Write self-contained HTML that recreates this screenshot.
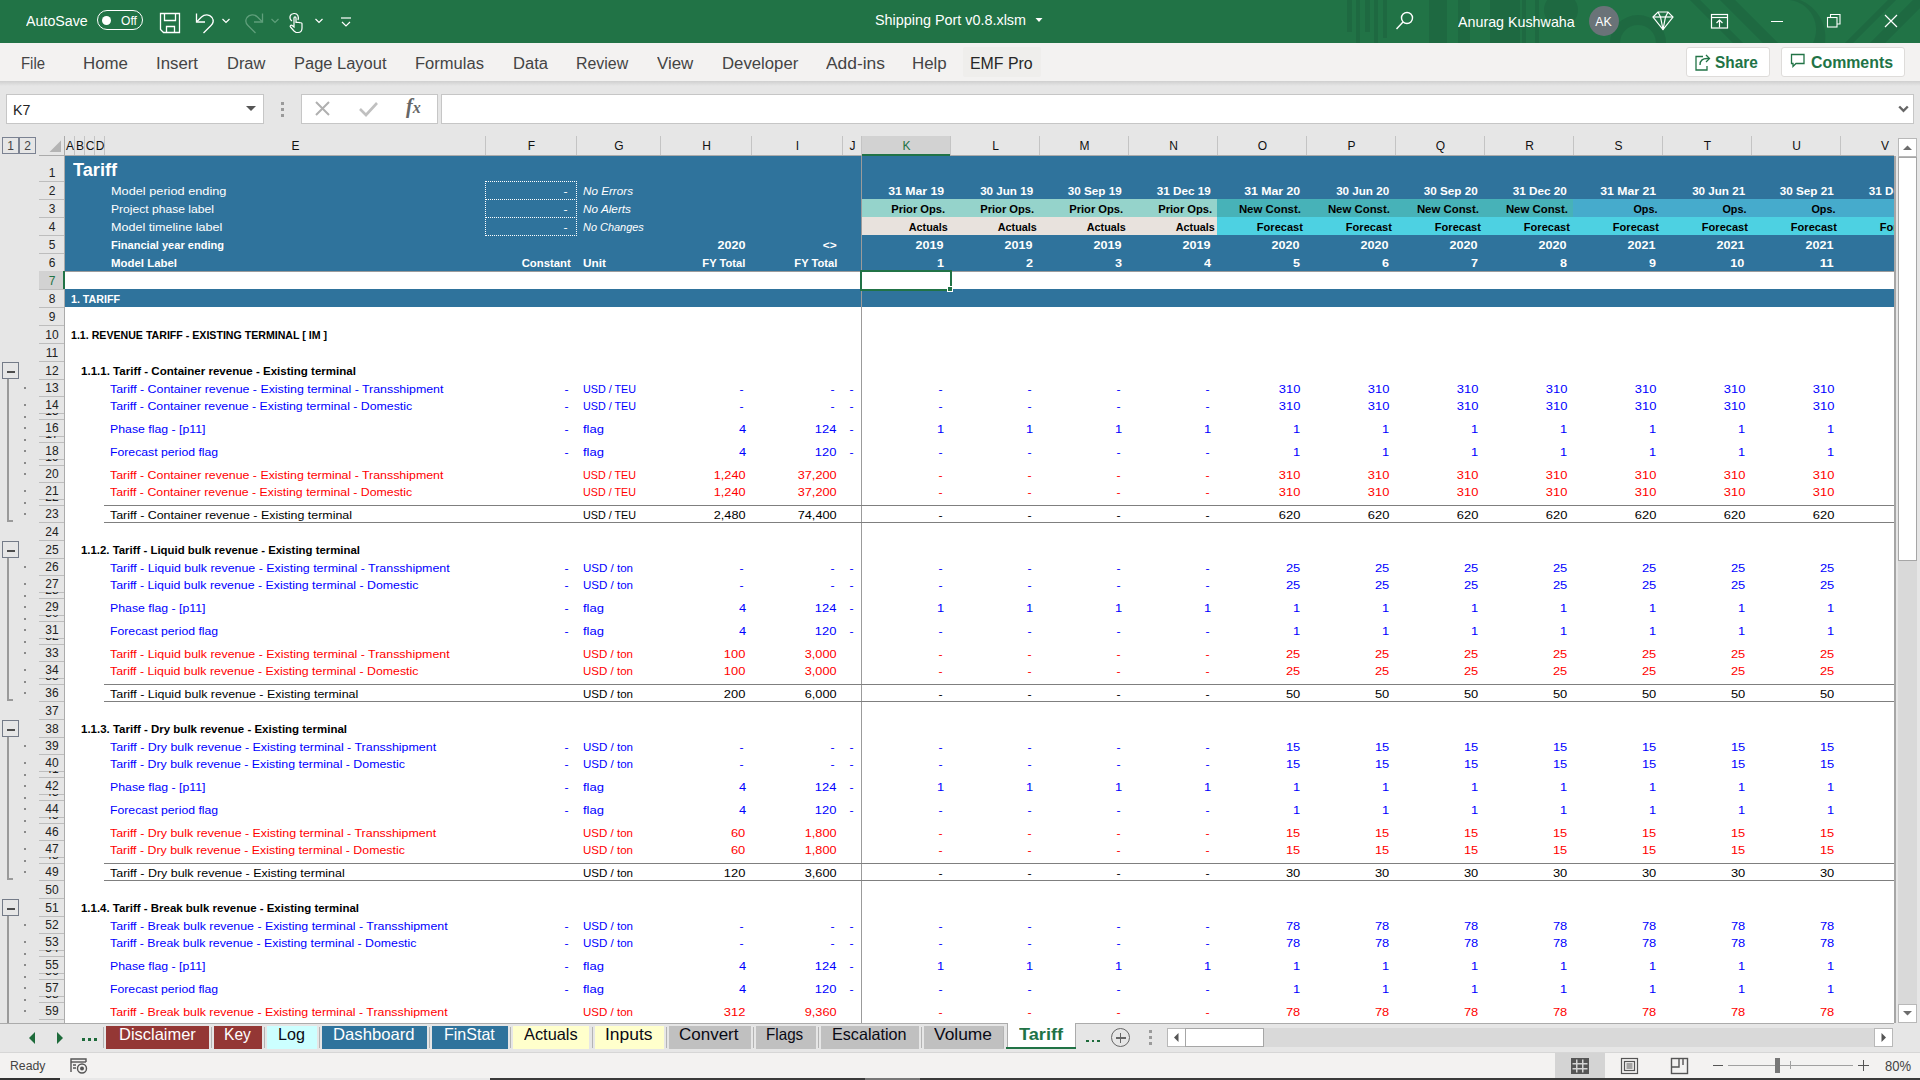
<!DOCTYPE html><html><head><meta charset="utf-8"><style>
html,body{margin:0;padding:0;}
body{width:1920px;height:1080px;overflow:hidden;position:relative;background:#fff;font-family:"Liberation Sans",sans-serif;}
.a{position:absolute;}
.t{position:absolute;white-space:pre;line-height:1;}
</style></head><body>
<div class="a" style="left:0px;top:0px;width:1920px;height:43px;background:#217346;"></div>
<svg class="a" style="left:1330px;top:0px;" width="590" height="43" viewBox="0 0 590 43">
<g fill="#1d6640" opacity="0.75">
<rect x="17" y="0" width="5" height="32"/><rect x="26" y="0" width="4" height="43"/><rect x="35" y="0" width="5" height="32"/>
<rect x="44" y="0" width="4" height="43"/><rect x="53" y="0" width="4" height="38"/>
<rect x="99" y="0" width="18" height="43"/><rect x="128" y="0" width="12" height="43"/>
<rect x="160" y="0" width="30" height="43"/><rect x="192" y="0" width="4" height="43"/>
<rect x="205" y="0" width="4" height="43"/>
<circle cx="231" cy="10" r="17"/>
<path d="M280 43 A 28 28 0 0 1 336 43 L 326 43 A 18 18 0 0 0 290 43 Z"/>
<path d="M390 0 L 405 0 L 448 43 L 433 43 Z"/><path d="M360 0 L 370 0 L 413 43 L 403 43 Z"/>
<path d="M470 0 A 40 40 0 0 1 495 43 L 483 43 A 30 30 0 0 0 460 0 Z"/>
<path d="M540 43 L 583 0 L 590 0 L 590 8 L 555 43 Z"/><path d="M515 43 L 558 0 L 566 0 L 523 43 Z"/>
</g></svg>
<div class="t" style="top:13.85px;font-size:14px;color:#fff;left:26.3px;transform:scaleX(1.0178);transform-origin:0 0;">AutoSave</div>
<div class="a" style="left:97px;top:10px;width:46px;height:20px;border:1px solid #fff;border-radius:10px;box-sizing:border-box;"></div>
<div class="a" style="left:102px;top:15.5px;width:9px;height:9px;border-radius:50%;background:#fff"></div>
<div class="t" style="top:14.30px;font-size:13px;color:#fff;left:120.6px;transform:scaleX(0.9293);transform-origin:0 0;">Off</div>
<svg class="a" style="left:158px;top:11px;" width="24" height="24" viewBox="0 0 24 24"><g fill="none" stroke="#ffffff" stroke-width="1.3"><path d="M2.5 2.5 H21.5 V21.5 H5.5 L2.5 18.5 Z"/><path d="M6.5 2.5 V9.5 H17.5 V2.5"/><path d="M8.5 21.5 V15.5 H16.5 V21.5"/></g></svg>
<svg class="a" style="left:193px;top:11px;" width="24" height="24" viewBox="0 0 24 24"><g fill="none" stroke="#ffffff" stroke-width="1.3"><path d="M3.5 2.5 V11 H12"/><path d="M4 10.5 L8.5 6 C 11.5 3, 16.5 3, 19 6.5 C 21 9.5, 20 12.5, 18 14.5 L 10.5 22"/></g></svg>
<svg class="a" style="left:220px;top:16px;" width="12" height="10" viewBox="0 0 12 10"><path d="M2.5 3 L6 6.5 L9.5 3" fill="none" stroke="#ffffff" stroke-width="1.2"/></svg>
<svg class="a" style="left:242px;top:11px;" width="24" height="24" viewBox="0 0 24 24"><g fill="none" stroke="#5f9f7b" stroke-width="1.3"><path d="M20.5 2.5 V11 H12"/><path d="M20 10.5 L15.5 6 C 12.5 3, 7.5 3, 5 6.5 C 3 9.5, 4 12.5, 6 14.5 L 13.5 22"/></g></svg>
<svg class="a" style="left:269px;top:16px;" width="12" height="10" viewBox="0 0 12 10"><path d="M2.5 3 L6 6.5 L9.5 3" fill="none" stroke="#5f9f7b" stroke-width="1.2"/></svg>
<svg class="a" style="left:286px;top:12px;" width="20" height="22" viewBox="0 0 20 22"><g fill="none" stroke="#ffffff" stroke-width="1.2"><path d="M6 9 C 3 7, 3 2, 8 1.5 C 12 1.2, 13 5, 12 8"/><path d="M8 19 L 4.5 15 C 3.5 13.8, 5 12.5, 6.2 13.5 L 8 15 V 6 C 8 4.5, 10 4.5, 10 6 V 11 C 10 10, 12 10, 12 11 C 12 10.2, 14 10.2, 14 11.2 C 14 10.6, 16 10.6, 16 11.6 V 16 C 16 18.5, 14.5 20.5, 12 20.5 H 10 Z"/></g></svg>
<svg class="a" style="left:313px;top:16px;" width="12" height="10" viewBox="0 0 12 10"><path d="M2.5 3 L6 6.5 L9.5 3" fill="none" stroke="#ffffff" stroke-width="1.2"/></svg>
<svg class="a" style="left:338px;top:15px;" width="16" height="14" viewBox="0 0 16 14"><g fill="none" stroke="#ffffff" stroke-width="1.2"><path d="M3 3 H13"/><path d="M4 7 L8 11 L12 7"/></g></svg>
<div class="t" style="top:12.30px;font-size:15px;color:#fff;left:875.4px;transform:scaleX(0.9582);transform-origin:0 0;">Shipping Port v0.8.xlsm</div>
<svg class="a" style="left:1034px;top:16px;" width="10" height="8" viewBox="0 0 10 8"><path d="M1.5 2 L8.5 2 L5 6 Z" fill="#ffffff"/></svg>
<svg class="a" style="left:1394px;top:10px;" width="22" height="22" viewBox="0 0 22 22"><g fill="none" stroke="#ffffff" stroke-width="1.4"><circle cx="13" cy="8" r="5.5"/><path d="M9 12 L2.5 19"/></g></svg>
<div class="t" style="top:13.80px;font-size:15px;color:#fff;left:1458.3px;transform:scaleX(0.9520);transform-origin:0 0;">Anurag Kushwaha</div>
<div class="a" style="left:1589px;top:6px;width:30px;height:30px;border-radius:50%;background:#6a7378"></div>
<div class="t" style="top:15.00px;font-size:13px;color:#fff;left:1604px;transform:translateX(-50%) scaleX(0.9500);transform-origin:0 0;">AK</div>
<svg class="a" style="left:1651px;top:10px;" width="24" height="22" viewBox="0 0 24 22"><g fill="none" stroke="#ffffff" stroke-width="1.2"><path d="M2 7 L7 2 H17 L22 7 L12 19.5 Z"/><path d="M2 7 H22"/><path d="M7 2 L9.5 7 L12 19.5 L14.5 7 L17 2"/></g></svg>
<svg class="a" style="left:1709px;top:12px;" width="22" height="20" viewBox="0 0 22 20"><g fill="none" stroke="#ffffff" stroke-width="1.2"><rect x="2.5" y="2.5" width="16" height="13.5"/><path d="M2.5 5.5 H18.5"/><path d="M10.5 15.5 V8.5 M7.5 11 L10.5 8 L13.5 11"/></g></svg>
<div class="a" style="left:1771px;top:21px;width:12px;height:1px;background:#ffffff;"></div>
<svg class="a" style="left:1826px;top:13px;" width="16" height="16" viewBox="0 0 16 16"><g fill="none" stroke="#ffffff" stroke-width="1.1"><rect x="1.5" y="4.5" width="9.5" height="9.5"/><path d="M4.5 4.5 V1.5 H14 V11 H11"/></g></svg>
<svg class="a" style="left:1883px;top:13px;" width="16" height="16" viewBox="0 0 16 16"><g fill="none" stroke="#ffffff" stroke-width="1.2"><path d="M2 2 L14 14 M14 2 L2 14"/></g></svg>
<div class="a" style="left:0px;top:43px;width:1920px;height:38px;background:#f3f2f1;"></div>
<div class="t" style="top:55.66px;font-size:16px;color:#444444;left:21px;transform:scaleX(0.9310);transform-origin:0 0;">File</div>
<div class="t" style="top:55.66px;font-size:16px;color:#444444;left:82.5px;transform:scaleX(1.0541);transform-origin:0 0;">Home</div>
<div class="t" style="top:55.66px;font-size:16px;color:#444444;left:156px;transform:scaleX(1.0495);transform-origin:0 0;">Insert</div>
<div class="t" style="top:55.66px;font-size:16px;color:#444444;left:226.6px;transform:scaleX(1.0284);transform-origin:0 0;">Draw</div>
<div class="t" style="top:55.66px;font-size:16px;color:#444444;left:294px;transform:scaleX(1.0294);transform-origin:0 0;">Page Layout</div>
<div class="t" style="top:55.66px;font-size:16px;color:#444444;left:415px;transform:scaleX(1.0346);transform-origin:0 0;">Formulas</div>
<div class="t" style="top:55.66px;font-size:16px;color:#444444;left:512.5px;transform:scaleX(1.0355);transform-origin:0 0;">Data</div>
<div class="t" style="top:55.66px;font-size:16px;color:#444444;left:576px;transform:scaleX(0.9949);transform-origin:0 0;">Review</div>
<div class="t" style="top:55.66px;font-size:16px;color:#444444;left:657px;transform:scaleX(1.0555);transform-origin:0 0;">View</div>
<div class="t" style="top:55.66px;font-size:16px;color:#444444;left:721.5px;transform:scaleX(1.0461);transform-origin:0 0;">Developer</div>
<div class="t" style="top:55.66px;font-size:16px;color:#444444;left:826px;transform:scaleX(1.0876);transform-origin:0 0;">Add-ins</div>
<div class="t" style="top:55.66px;font-size:16px;color:#444444;left:912px;transform:scaleX(1.0544);transform-origin:0 0;">Help</div>
<div class="a" style="left:963px;top:47px;width:78px;height:30px;background:#efeeec;border-radius:2px;"></div>
<div class="t" style="top:55.96px;font-size:16px;color:#262626;left:970px;transform:scaleX(0.9933);transform-origin:0 0;">EMF Pro</div>
<div class="a" style="left:1686px;top:47px;width:84px;height:30px;background:#ffffff;border:1px solid #dedcda;border-radius:3px;box-sizing:border-box;"></div>
<svg class="a" style="left:1693px;top:51px;" width="18" height="22" viewBox="0 0 18 22"><g fill="none" stroke="#217346" stroke-width="1.3"><path d="M10 5.5 H3 V19 H14 V15"/><path d="M7 14 C 7 9, 10 7.5, 14 7.5 H 16"/><path d="M13 4 L16.5 7.5 L13 11"/></g></svg>
<div class="t" style="top:54.96px;font-size:16px;color:#217346;font-weight:700;left:1715px;transform:scaleX(0.9602);transform-origin:0 0;">Share</div>
<div class="a" style="left:1781px;top:47px;width:124px;height:30px;background:#ffffff;border:1px solid #dedcda;border-radius:3px;box-sizing:border-box;"></div>
<svg class="a" style="left:1789px;top:52px;" width="18" height="18" viewBox="0 0 18 18"><g fill="none" stroke="#217346" stroke-width="1.3"><path d="M2.5 2.5 H15 V11.5 H7 L4 14.5 V11.5 H2.5 Z"/></g></svg>
<div class="t" style="top:54.96px;font-size:16px;color:#217346;font-weight:700;left:1810.7px;transform:scaleX(0.9917);transform-origin:0 0;">Comments</div>
<div class="a" style="left:0px;top:81px;width:1920px;height:55px;background:#e6e6e6;"></div>
<div class="a" style="left:0;top:81px;width:1920px;height:5px;background:linear-gradient(#cfcfcf,#e6e6e6)"></div>
<div class="a" style="left:6px;top:94px;width:258px;height:30px;background:#fff;border:1px solid #c6c6c6;box-sizing:border-box;"></div>
<div class="t" style="top:102.30px;font-size:15px;color:#222;left:13px;transform:scaleX(0.9459);transform-origin:0 0;">K7</div>
<svg class="a" style="left:245px;top:104px;" width="12" height="10" viewBox="0 0 12 10"><path d="M1 2 H11 L6 7 Z" fill="#555"/></svg>
<div class="a" style="left:281px;top:102px;width:3px;height:3px;background:#9a9a9a;"></div>
<div class="a" style="left:281px;top:108px;width:3px;height:3px;background:#9a9a9a;"></div>
<div class="a" style="left:281px;top:114px;width:3px;height:3px;background:#9a9a9a;"></div>
<div class="a" style="left:301px;top:94px;width:137px;height:30px;background:#fff;border:1px solid #c6c6c6;box-sizing:border-box;"></div>
<svg class="a" style="left:314px;top:99px;" width="18" height="20" viewBox="0 0 18 20"><path d="M2 3 L15 16 M15 3 L2 16" fill="none" stroke="#b0b0b0" stroke-width="2"/></svg>
<svg class="a" style="left:358px;top:99px;" width="22" height="20" viewBox="0 0 22 20"><path d="M2 10 L8 16 L19 4" fill="none" stroke="#c0c0c0" stroke-width="2.6"/></svg>
<div class="t" style="left:406px;top:96px;font-family:'Liberation Serif',serif;font-style:italic;font-weight:700;font-size:20px;color:#666;line-height:1;">f<span style="font-size:16px">x</span></div>
<div class="a" style="left:441px;top:94px;width:1473px;height:30px;background:#fff;border:1px solid #c6c6c6;box-sizing:border-box;"></div>
<svg class="a" style="left:1898px;top:104px;" width="11" height="9" viewBox="0 0 11 9"><path d="M1.2 2.5 L5.5 6.8 L9.8 2.5" fill="none" stroke="#666" stroke-width="2.4"/></svg>
<div class="a" style="left:0px;top:136px;width:1920px;height:20px;background:#e6e6e6;"></div>
<div class="a" style="left:39px;top:155px;width:1855px;height:1px;background:#ababab;"></div>
<div class="a" style="left:2px;top:137px;width:17px;height:17px;border:1px solid #7b8292;box-sizing:border-box;"></div>
<div class="a" style="left:19px;top:137px;width:17px;height:17px;border:1px solid #7b8292;box-sizing:border-box;"></div>
<div class="t" style="top:140.34px;font-size:12px;color:#444;left:10.5px;transform:translateX(-50%) scaleX(1.0000);transform-origin:0 0;">1</div>
<div class="t" style="top:140.34px;font-size:12px;color:#444;left:27.5px;transform:translateX(-50%) scaleX(1.0000);transform-origin:0 0;">2</div>
<svg class="a" style="left:49px;top:140px;" width="13" height="13" viewBox="0 0 13 13"><path d="M12 0.5 V12 H0.5 Z" fill="#b4b4b4"/></svg>
<div class="a" style="left:64px;top:136px;width:1px;height:20px;background:#ababab;"></div>
<div class="a" style="left:862px;top:136px;width:88px;height:19px;background:#d2d2d2;"></div>
<div class="a" style="left:862px;top:154px;width:88px;height:2px;background:#217346;"></div>
<div class="a" style="left:74px;top:136px;width:1px;height:19px;background:#c4c4c4;"></div>
<div class="t" style="top:140.34px;font-size:12px;color:#111;left:70.0px;transform:translateX(-50%) scaleX(1.0000);transform-origin:0 0;">A</div>
<div class="a" style="left:84px;top:136px;width:1px;height:19px;background:#c4c4c4;"></div>
<div class="t" style="top:140.34px;font-size:12px;color:#111;left:80.0px;transform:translateX(-50%) scaleX(1.0000);transform-origin:0 0;">B</div>
<div class="a" style="left:94px;top:136px;width:1px;height:19px;background:#c4c4c4;"></div>
<div class="t" style="top:140.34px;font-size:12px;color:#111;left:90.0px;transform:translateX(-50%) scaleX(1.0000);transform-origin:0 0;">C</div>
<div class="a" style="left:104px;top:136px;width:1px;height:19px;background:#c4c4c4;"></div>
<div class="t" style="top:140.34px;font-size:12px;color:#111;left:100.0px;transform:translateX(-50%) scaleX(1.0000);transform-origin:0 0;">D</div>
<div class="a" style="left:485px;top:136px;width:1px;height:19px;background:#c4c4c4;"></div>
<div class="t" style="top:140.34px;font-size:12px;color:#111;left:295.5px;transform:translateX(-50%) scaleX(1.0000);transform-origin:0 0;">E</div>
<div class="a" style="left:576px;top:136px;width:1px;height:19px;background:#c4c4c4;"></div>
<div class="t" style="top:140.34px;font-size:12px;color:#111;left:531.5px;transform:translateX(-50%) scaleX(1.0000);transform-origin:0 0;">F</div>
<div class="a" style="left:660px;top:136px;width:1px;height:19px;background:#c4c4c4;"></div>
<div class="t" style="top:140.34px;font-size:12px;color:#111;left:619.0px;transform:translateX(-50%) scaleX(1.0000);transform-origin:0 0;">G</div>
<div class="a" style="left:751px;top:136px;width:1px;height:19px;background:#c4c4c4;"></div>
<div class="t" style="top:140.34px;font-size:12px;color:#111;left:706.5px;transform:translateX(-50%) scaleX(1.0000);transform-origin:0 0;">H</div>
<div class="a" style="left:842px;top:136px;width:1px;height:19px;background:#c4c4c4;"></div>
<div class="t" style="top:140.34px;font-size:12px;color:#111;left:797.5px;transform:translateX(-50%) scaleX(1.0000);transform-origin:0 0;">I</div>
<div class="a" style="left:861px;top:136px;width:1px;height:19px;background:#c4c4c4;"></div>
<div class="t" style="top:140.34px;font-size:12px;color:#111;left:852.5px;transform:translateX(-50%) scaleX(1.0000);transform-origin:0 0;">J</div>
<div class="a" style="left:950px;top:136px;width:1px;height:19px;background:#c4c4c4;"></div>
<div class="t" style="top:140.34px;font-size:12px;color:#217346;left:906.5px;transform:translateX(-50%) scaleX(1.0000);transform-origin:0 0;">K</div>
<div class="a" style="left:1039px;top:136px;width:1px;height:19px;background:#c4c4c4;"></div>
<div class="t" style="top:140.34px;font-size:12px;color:#111;left:995.5px;transform:translateX(-50%) scaleX(1.0000);transform-origin:0 0;">L</div>
<div class="a" style="left:1128px;top:136px;width:1px;height:19px;background:#c4c4c4;"></div>
<div class="t" style="top:140.34px;font-size:12px;color:#111;left:1084.5px;transform:translateX(-50%) scaleX(1.0000);transform-origin:0 0;">M</div>
<div class="a" style="left:1217px;top:136px;width:1px;height:19px;background:#c4c4c4;"></div>
<div class="t" style="top:140.34px;font-size:12px;color:#111;left:1173.5px;transform:translateX(-50%) scaleX(1.0000);transform-origin:0 0;">N</div>
<div class="a" style="left:1306px;top:136px;width:1px;height:19px;background:#c4c4c4;"></div>
<div class="t" style="top:140.34px;font-size:12px;color:#111;left:1262.5px;transform:translateX(-50%) scaleX(1.0000);transform-origin:0 0;">O</div>
<div class="a" style="left:1395px;top:136px;width:1px;height:19px;background:#c4c4c4;"></div>
<div class="t" style="top:140.34px;font-size:12px;color:#111;left:1351.5px;transform:translateX(-50%) scaleX(1.0000);transform-origin:0 0;">P</div>
<div class="a" style="left:1484px;top:136px;width:1px;height:19px;background:#c4c4c4;"></div>
<div class="t" style="top:140.34px;font-size:12px;color:#111;left:1440.5px;transform:translateX(-50%) scaleX(1.0000);transform-origin:0 0;">Q</div>
<div class="a" style="left:1573px;top:136px;width:1px;height:19px;background:#c4c4c4;"></div>
<div class="t" style="top:140.34px;font-size:12px;color:#111;left:1529.5px;transform:translateX(-50%) scaleX(1.0000);transform-origin:0 0;">R</div>
<div class="a" style="left:1662px;top:136px;width:1px;height:19px;background:#c4c4c4;"></div>
<div class="t" style="top:140.34px;font-size:12px;color:#111;left:1618.5px;transform:translateX(-50%) scaleX(1.0000);transform-origin:0 0;">S</div>
<div class="a" style="left:1751px;top:136px;width:1px;height:19px;background:#c4c4c4;"></div>
<div class="t" style="top:140.34px;font-size:12px;color:#111;left:1707.5px;transform:translateX(-50%) scaleX(1.0000);transform-origin:0 0;">T</div>
<div class="a" style="left:1840px;top:136px;width:1px;height:19px;background:#c4c4c4;"></div>
<div class="t" style="top:140.34px;font-size:12px;color:#111;left:1796.5px;transform:translateX(-50%) scaleX(1.0000);transform-origin:0 0;">U</div>
<div class="t" style="top:140.34px;font-size:12px;color:#111;left:1885px;transform:translateX(-50%) scaleX(1.0000);transform-origin:0 0;">V</div>
<div class="a" style="left:0px;top:156px;width:64px;height:867px;background:#e6e6e6;"></div>
<div class="a" style="left:64px;top:156px;width:1px;height:867px;background:#ababab;"></div>
<div class="a" style="left:39px;top:156px;width:25px;height:25px;overflow:hidden">
<div class="t" style="left:0;width:26px;text-align:center;top:10.54px;font-size:12px;color:#222">1</div>
</div>
<div class="a" style="left:39px;top:181px;width:25px;height:1px;background:#bdbdbd;"></div>
<div class="a" style="left:39px;top:181px;width:25px;height:18px;overflow:hidden">
<div class="t" style="left:0;width:26px;text-align:center;top:3.54px;font-size:12px;color:#222">2</div>
</div>
<div class="a" style="left:39px;top:199px;width:25px;height:1px;background:#bdbdbd;"></div>
<div class="a" style="left:39px;top:199px;width:25px;height:18px;overflow:hidden">
<div class="t" style="left:0;width:26px;text-align:center;top:3.54px;font-size:12px;color:#222">3</div>
</div>
<div class="a" style="left:39px;top:217px;width:25px;height:1px;background:#bdbdbd;"></div>
<div class="a" style="left:39px;top:217px;width:25px;height:18px;overflow:hidden">
<div class="t" style="left:0;width:26px;text-align:center;top:3.54px;font-size:12px;color:#222">4</div>
</div>
<div class="a" style="left:39px;top:235px;width:25px;height:1px;background:#bdbdbd;"></div>
<div class="a" style="left:39px;top:235px;width:25px;height:18px;overflow:hidden">
<div class="t" style="left:0;width:26px;text-align:center;top:3.54px;font-size:12px;color:#222">5</div>
</div>
<div class="a" style="left:39px;top:253px;width:25px;height:1px;background:#bdbdbd;"></div>
<div class="a" style="left:39px;top:253px;width:25px;height:18px;overflow:hidden">
<div class="t" style="left:0;width:26px;text-align:center;top:3.54px;font-size:12px;color:#222">6</div>
</div>
<div class="a" style="left:39px;top:271px;width:25px;height:1px;background:#bdbdbd;"></div>
<div class="a" style="left:39px;top:271px;width:24px;height:18px;background:#d2d2d2;"></div>
<div class="a" style="left:63px;top:271px;width:2px;height:18px;background:#217346;"></div>
<div class="a" style="left:39px;top:271px;width:25px;height:18px;overflow:hidden">
<div class="t" style="left:0;width:26px;text-align:center;top:3.54px;font-size:12px;color:#217346">7</div>
</div>
<div class="a" style="left:39px;top:289px;width:25px;height:1px;background:#bdbdbd;"></div>
<div class="a" style="left:39px;top:289px;width:25px;height:18px;overflow:hidden">
<div class="t" style="left:0;width:26px;text-align:center;top:3.54px;font-size:12px;color:#222">8</div>
</div>
<div class="a" style="left:39px;top:307px;width:25px;height:1px;background:#bdbdbd;"></div>
<div class="a" style="left:39px;top:307px;width:25px;height:18px;overflow:hidden">
<div class="t" style="left:0;width:26px;text-align:center;top:3.54px;font-size:12px;color:#222">9</div>
</div>
<div class="a" style="left:39px;top:325px;width:25px;height:1px;background:#bdbdbd;"></div>
<div class="a" style="left:39px;top:325px;width:25px;height:18px;overflow:hidden">
<div class="t" style="left:0;width:26px;text-align:center;top:3.54px;font-size:12px;color:#222">10</div>
</div>
<div class="a" style="left:39px;top:343px;width:25px;height:1px;background:#bdbdbd;"></div>
<div class="a" style="left:39px;top:343px;width:25px;height:18px;overflow:hidden">
<div class="t" style="left:0;width:26px;text-align:center;top:3.54px;font-size:12px;color:#222">11</div>
</div>
<div class="a" style="left:39px;top:361px;width:25px;height:1px;background:#bdbdbd;"></div>
<div class="a" style="left:39px;top:361px;width:25px;height:18px;overflow:hidden">
<div class="t" style="left:0;width:26px;text-align:center;top:3.54px;font-size:12px;color:#222">12</div>
</div>
<div class="a" style="left:39px;top:379px;width:25px;height:1px;background:#bdbdbd;"></div>
<div class="a" style="left:39px;top:379px;width:25px;height:17px;overflow:hidden">
<div class="t" style="left:0;width:26px;text-align:center;top:2.54px;font-size:12px;color:#222">13</div>
</div>
<div class="a" style="left:39px;top:396px;width:25px;height:1px;background:#bdbdbd;"></div>
<div class="a" style="left:39px;top:396px;width:25px;height:17px;overflow:hidden">
<div class="t" style="left:0;width:26px;text-align:center;top:2.54px;font-size:12px;color:#222">14</div>
</div>
<div class="a" style="left:39px;top:413px;width:25px;height:1px;background:#bdbdbd;"></div>
<div class="a" style="left:39px;top:413px;width:25px;height:6px;overflow:hidden">
<div class="t" style="left:0;width:26px;text-align:center;top:-8.46px;font-size:12px;color:#222">15</div>
</div>
<div class="a" style="left:39px;top:419px;width:25px;height:1px;background:#bdbdbd;"></div>
<div class="a" style="left:39px;top:419px;width:25px;height:17px;overflow:hidden">
<div class="t" style="left:0;width:26px;text-align:center;top:2.54px;font-size:12px;color:#222">16</div>
</div>
<div class="a" style="left:39px;top:436px;width:25px;height:1px;background:#bdbdbd;"></div>
<div class="a" style="left:39px;top:436px;width:25px;height:6px;overflow:hidden">
<div class="t" style="left:0;width:26px;text-align:center;top:-8.46px;font-size:12px;color:#222">17</div>
</div>
<div class="a" style="left:39px;top:442px;width:25px;height:1px;background:#bdbdbd;"></div>
<div class="a" style="left:39px;top:442px;width:25px;height:17px;overflow:hidden">
<div class="t" style="left:0;width:26px;text-align:center;top:2.54px;font-size:12px;color:#222">18</div>
</div>
<div class="a" style="left:39px;top:459px;width:25px;height:1px;background:#bdbdbd;"></div>
<div class="a" style="left:39px;top:459px;width:25px;height:6px;overflow:hidden">
<div class="t" style="left:0;width:26px;text-align:center;top:-8.46px;font-size:12px;color:#222">19</div>
</div>
<div class="a" style="left:39px;top:465px;width:25px;height:1px;background:#bdbdbd;"></div>
<div class="a" style="left:39px;top:465px;width:25px;height:17px;overflow:hidden">
<div class="t" style="left:0;width:26px;text-align:center;top:2.54px;font-size:12px;color:#222">20</div>
</div>
<div class="a" style="left:39px;top:482px;width:25px;height:1px;background:#bdbdbd;"></div>
<div class="a" style="left:39px;top:482px;width:25px;height:17px;overflow:hidden">
<div class="t" style="left:0;width:26px;text-align:center;top:2.54px;font-size:12px;color:#222">21</div>
</div>
<div class="a" style="left:39px;top:499px;width:25px;height:1px;background:#bdbdbd;"></div>
<div class="a" style="left:39px;top:499px;width:25px;height:6px;overflow:hidden">
<div class="t" style="left:0;width:26px;text-align:center;top:-8.46px;font-size:12px;color:#222">22</div>
</div>
<div class="a" style="left:39px;top:505px;width:25px;height:1px;background:#bdbdbd;"></div>
<div class="a" style="left:39px;top:505px;width:25px;height:17px;overflow:hidden">
<div class="t" style="left:0;width:26px;text-align:center;top:2.54px;font-size:12px;color:#222">23</div>
</div>
<div class="a" style="left:39px;top:522px;width:25px;height:1px;background:#bdbdbd;"></div>
<div class="a" style="left:39px;top:522px;width:25px;height:18px;overflow:hidden">
<div class="t" style="left:0;width:26px;text-align:center;top:3.54px;font-size:12px;color:#222">24</div>
</div>
<div class="a" style="left:39px;top:540px;width:25px;height:1px;background:#bdbdbd;"></div>
<div class="a" style="left:39px;top:540px;width:25px;height:18px;overflow:hidden">
<div class="t" style="left:0;width:26px;text-align:center;top:3.54px;font-size:12px;color:#222">25</div>
</div>
<div class="a" style="left:39px;top:558px;width:25px;height:1px;background:#bdbdbd;"></div>
<div class="a" style="left:39px;top:558px;width:25px;height:17px;overflow:hidden">
<div class="t" style="left:0;width:26px;text-align:center;top:2.54px;font-size:12px;color:#222">26</div>
</div>
<div class="a" style="left:39px;top:575px;width:25px;height:1px;background:#bdbdbd;"></div>
<div class="a" style="left:39px;top:575px;width:25px;height:17px;overflow:hidden">
<div class="t" style="left:0;width:26px;text-align:center;top:2.54px;font-size:12px;color:#222">27</div>
</div>
<div class="a" style="left:39px;top:592px;width:25px;height:1px;background:#bdbdbd;"></div>
<div class="a" style="left:39px;top:592px;width:25px;height:6px;overflow:hidden">
<div class="t" style="left:0;width:26px;text-align:center;top:-8.46px;font-size:12px;color:#222">28</div>
</div>
<div class="a" style="left:39px;top:598px;width:25px;height:1px;background:#bdbdbd;"></div>
<div class="a" style="left:39px;top:598px;width:25px;height:17px;overflow:hidden">
<div class="t" style="left:0;width:26px;text-align:center;top:2.54px;font-size:12px;color:#222">29</div>
</div>
<div class="a" style="left:39px;top:615px;width:25px;height:1px;background:#bdbdbd;"></div>
<div class="a" style="left:39px;top:615px;width:25px;height:6px;overflow:hidden">
<div class="t" style="left:0;width:26px;text-align:center;top:-8.46px;font-size:12px;color:#222">30</div>
</div>
<div class="a" style="left:39px;top:621px;width:25px;height:1px;background:#bdbdbd;"></div>
<div class="a" style="left:39px;top:621px;width:25px;height:17px;overflow:hidden">
<div class="t" style="left:0;width:26px;text-align:center;top:2.54px;font-size:12px;color:#222">31</div>
</div>
<div class="a" style="left:39px;top:638px;width:25px;height:1px;background:#bdbdbd;"></div>
<div class="a" style="left:39px;top:638px;width:25px;height:6px;overflow:hidden">
<div class="t" style="left:0;width:26px;text-align:center;top:-8.46px;font-size:12px;color:#222">32</div>
</div>
<div class="a" style="left:39px;top:644px;width:25px;height:1px;background:#bdbdbd;"></div>
<div class="a" style="left:39px;top:644px;width:25px;height:17px;overflow:hidden">
<div class="t" style="left:0;width:26px;text-align:center;top:2.54px;font-size:12px;color:#222">33</div>
</div>
<div class="a" style="left:39px;top:661px;width:25px;height:1px;background:#bdbdbd;"></div>
<div class="a" style="left:39px;top:661px;width:25px;height:17px;overflow:hidden">
<div class="t" style="left:0;width:26px;text-align:center;top:2.54px;font-size:12px;color:#222">34</div>
</div>
<div class="a" style="left:39px;top:678px;width:25px;height:1px;background:#bdbdbd;"></div>
<div class="a" style="left:39px;top:678px;width:25px;height:6px;overflow:hidden">
<div class="t" style="left:0;width:26px;text-align:center;top:-8.46px;font-size:12px;color:#222">35</div>
</div>
<div class="a" style="left:39px;top:684px;width:25px;height:1px;background:#bdbdbd;"></div>
<div class="a" style="left:39px;top:684px;width:25px;height:17px;overflow:hidden">
<div class="t" style="left:0;width:26px;text-align:center;top:2.54px;font-size:12px;color:#222">36</div>
</div>
<div class="a" style="left:39px;top:701px;width:25px;height:1px;background:#bdbdbd;"></div>
<div class="a" style="left:39px;top:701px;width:25px;height:18px;overflow:hidden">
<div class="t" style="left:0;width:26px;text-align:center;top:3.54px;font-size:12px;color:#222">37</div>
</div>
<div class="a" style="left:39px;top:719px;width:25px;height:1px;background:#bdbdbd;"></div>
<div class="a" style="left:39px;top:719px;width:25px;height:18px;overflow:hidden">
<div class="t" style="left:0;width:26px;text-align:center;top:3.54px;font-size:12px;color:#222">38</div>
</div>
<div class="a" style="left:39px;top:737px;width:25px;height:1px;background:#bdbdbd;"></div>
<div class="a" style="left:39px;top:737px;width:25px;height:17px;overflow:hidden">
<div class="t" style="left:0;width:26px;text-align:center;top:2.54px;font-size:12px;color:#222">39</div>
</div>
<div class="a" style="left:39px;top:754px;width:25px;height:1px;background:#bdbdbd;"></div>
<div class="a" style="left:39px;top:754px;width:25px;height:17px;overflow:hidden">
<div class="t" style="left:0;width:26px;text-align:center;top:2.54px;font-size:12px;color:#222">40</div>
</div>
<div class="a" style="left:39px;top:771px;width:25px;height:1px;background:#bdbdbd;"></div>
<div class="a" style="left:39px;top:771px;width:25px;height:6px;overflow:hidden">
<div class="t" style="left:0;width:26px;text-align:center;top:-8.46px;font-size:12px;color:#222">41</div>
</div>
<div class="a" style="left:39px;top:777px;width:25px;height:1px;background:#bdbdbd;"></div>
<div class="a" style="left:39px;top:777px;width:25px;height:17px;overflow:hidden">
<div class="t" style="left:0;width:26px;text-align:center;top:2.54px;font-size:12px;color:#222">42</div>
</div>
<div class="a" style="left:39px;top:794px;width:25px;height:1px;background:#bdbdbd;"></div>
<div class="a" style="left:39px;top:794px;width:25px;height:6px;overflow:hidden">
<div class="t" style="left:0;width:26px;text-align:center;top:-8.46px;font-size:12px;color:#222">43</div>
</div>
<div class="a" style="left:39px;top:800px;width:25px;height:1px;background:#bdbdbd;"></div>
<div class="a" style="left:39px;top:800px;width:25px;height:17px;overflow:hidden">
<div class="t" style="left:0;width:26px;text-align:center;top:2.54px;font-size:12px;color:#222">44</div>
</div>
<div class="a" style="left:39px;top:817px;width:25px;height:1px;background:#bdbdbd;"></div>
<div class="a" style="left:39px;top:817px;width:25px;height:6px;overflow:hidden">
<div class="t" style="left:0;width:26px;text-align:center;top:-8.46px;font-size:12px;color:#222">45</div>
</div>
<div class="a" style="left:39px;top:823px;width:25px;height:1px;background:#bdbdbd;"></div>
<div class="a" style="left:39px;top:823px;width:25px;height:17px;overflow:hidden">
<div class="t" style="left:0;width:26px;text-align:center;top:2.54px;font-size:12px;color:#222">46</div>
</div>
<div class="a" style="left:39px;top:840px;width:25px;height:1px;background:#bdbdbd;"></div>
<div class="a" style="left:39px;top:840px;width:25px;height:17px;overflow:hidden">
<div class="t" style="left:0;width:26px;text-align:center;top:2.54px;font-size:12px;color:#222">47</div>
</div>
<div class="a" style="left:39px;top:857px;width:25px;height:1px;background:#bdbdbd;"></div>
<div class="a" style="left:39px;top:857px;width:25px;height:6px;overflow:hidden">
<div class="t" style="left:0;width:26px;text-align:center;top:-8.46px;font-size:12px;color:#222">48</div>
</div>
<div class="a" style="left:39px;top:863px;width:25px;height:1px;background:#bdbdbd;"></div>
<div class="a" style="left:39px;top:863px;width:25px;height:17px;overflow:hidden">
<div class="t" style="left:0;width:26px;text-align:center;top:2.54px;font-size:12px;color:#222">49</div>
</div>
<div class="a" style="left:39px;top:880px;width:25px;height:1px;background:#bdbdbd;"></div>
<div class="a" style="left:39px;top:880px;width:25px;height:18px;overflow:hidden">
<div class="t" style="left:0;width:26px;text-align:center;top:3.54px;font-size:12px;color:#222">50</div>
</div>
<div class="a" style="left:39px;top:898px;width:25px;height:1px;background:#bdbdbd;"></div>
<div class="a" style="left:39px;top:898px;width:25px;height:18px;overflow:hidden">
<div class="t" style="left:0;width:26px;text-align:center;top:3.54px;font-size:12px;color:#222">51</div>
</div>
<div class="a" style="left:39px;top:916px;width:25px;height:1px;background:#bdbdbd;"></div>
<div class="a" style="left:39px;top:916px;width:25px;height:17px;overflow:hidden">
<div class="t" style="left:0;width:26px;text-align:center;top:2.54px;font-size:12px;color:#222">52</div>
</div>
<div class="a" style="left:39px;top:933px;width:25px;height:1px;background:#bdbdbd;"></div>
<div class="a" style="left:39px;top:933px;width:25px;height:17px;overflow:hidden">
<div class="t" style="left:0;width:26px;text-align:center;top:2.54px;font-size:12px;color:#222">53</div>
</div>
<div class="a" style="left:39px;top:950px;width:25px;height:1px;background:#bdbdbd;"></div>
<div class="a" style="left:39px;top:950px;width:25px;height:6px;overflow:hidden">
<div class="t" style="left:0;width:26px;text-align:center;top:-8.46px;font-size:12px;color:#222">54</div>
</div>
<div class="a" style="left:39px;top:956px;width:25px;height:1px;background:#bdbdbd;"></div>
<div class="a" style="left:39px;top:956px;width:25px;height:17px;overflow:hidden">
<div class="t" style="left:0;width:26px;text-align:center;top:2.54px;font-size:12px;color:#222">55</div>
</div>
<div class="a" style="left:39px;top:973px;width:25px;height:1px;background:#bdbdbd;"></div>
<div class="a" style="left:39px;top:973px;width:25px;height:6px;overflow:hidden">
<div class="t" style="left:0;width:26px;text-align:center;top:-8.46px;font-size:12px;color:#222">56</div>
</div>
<div class="a" style="left:39px;top:979px;width:25px;height:1px;background:#bdbdbd;"></div>
<div class="a" style="left:39px;top:979px;width:25px;height:17px;overflow:hidden">
<div class="t" style="left:0;width:26px;text-align:center;top:2.54px;font-size:12px;color:#222">57</div>
</div>
<div class="a" style="left:39px;top:996px;width:25px;height:1px;background:#bdbdbd;"></div>
<div class="a" style="left:39px;top:996px;width:25px;height:6px;overflow:hidden">
<div class="t" style="left:0;width:26px;text-align:center;top:-8.46px;font-size:12px;color:#222">58</div>
</div>
<div class="a" style="left:39px;top:1002px;width:25px;height:1px;background:#bdbdbd;"></div>
<div class="a" style="left:39px;top:1002px;width:25px;height:17px;overflow:hidden">
<div class="t" style="left:0;width:26px;text-align:center;top:2.54px;font-size:12px;color:#222">59</div>
</div>
<div class="a" style="left:39px;top:1019px;width:25px;height:1px;background:#bdbdbd;"></div>
<div class="a" style="left:39px;top:1019px;width:25px;height:4px;overflow:hidden">
<div class="t" style="left:0;width:26px;text-align:center;top:2.54px;font-size:12px;color:#222">60</div>
</div>
<div class="a" style="left:2px;top:362px;width:17px;height:17px;border:1px solid #747b88;box-sizing:border-box"></div>
<div class="a" style="left:7px;top:371px;width:8px;height:2px;background:#4d4d4d;"></div>
<div class="a" style="left:7px;top:379px;width:2px;height:143px;background:#9a9a9a;"></div>
<div class="a" style="left:7px;top:520px;width:6px;height:2px;background:#9a9a9a;"></div>
<div class="a" style="left:24px;top:387px;width:2px;height:2px;background:#8a8a8a;"></div>
<div class="a" style="left:24px;top:404px;width:2px;height:2px;background:#8a8a8a;"></div>
<div class="a" style="left:24px;top:416px;width:2px;height:2px;background:#8a8a8a;"></div>
<div class="a" style="left:24px;top:427px;width:2px;height:2px;background:#8a8a8a;"></div>
<div class="a" style="left:24px;top:439px;width:2px;height:2px;background:#8a8a8a;"></div>
<div class="a" style="left:24px;top:450px;width:2px;height:2px;background:#8a8a8a;"></div>
<div class="a" style="left:24px;top:462px;width:2px;height:2px;background:#8a8a8a;"></div>
<div class="a" style="left:24px;top:473px;width:2px;height:2px;background:#8a8a8a;"></div>
<div class="a" style="left:24px;top:490px;width:2px;height:2px;background:#8a8a8a;"></div>
<div class="a" style="left:24px;top:502px;width:2px;height:2px;background:#8a8a8a;"></div>
<div class="a" style="left:24px;top:513px;width:2px;height:2px;background:#8a8a8a;"></div>
<div class="a" style="left:2px;top:541px;width:17px;height:17px;border:1px solid #747b88;box-sizing:border-box"></div>
<div class="a" style="left:7px;top:550px;width:8px;height:2px;background:#4d4d4d;"></div>
<div class="a" style="left:7px;top:558px;width:2px;height:143px;background:#9a9a9a;"></div>
<div class="a" style="left:7px;top:699px;width:6px;height:2px;background:#9a9a9a;"></div>
<div class="a" style="left:24px;top:566px;width:2px;height:2px;background:#8a8a8a;"></div>
<div class="a" style="left:24px;top:583px;width:2px;height:2px;background:#8a8a8a;"></div>
<div class="a" style="left:24px;top:595px;width:2px;height:2px;background:#8a8a8a;"></div>
<div class="a" style="left:24px;top:606px;width:2px;height:2px;background:#8a8a8a;"></div>
<div class="a" style="left:24px;top:618px;width:2px;height:2px;background:#8a8a8a;"></div>
<div class="a" style="left:24px;top:629px;width:2px;height:2px;background:#8a8a8a;"></div>
<div class="a" style="left:24px;top:641px;width:2px;height:2px;background:#8a8a8a;"></div>
<div class="a" style="left:24px;top:652px;width:2px;height:2px;background:#8a8a8a;"></div>
<div class="a" style="left:24px;top:669px;width:2px;height:2px;background:#8a8a8a;"></div>
<div class="a" style="left:24px;top:681px;width:2px;height:2px;background:#8a8a8a;"></div>
<div class="a" style="left:24px;top:692px;width:2px;height:2px;background:#8a8a8a;"></div>
<div class="a" style="left:2px;top:720px;width:17px;height:17px;border:1px solid #747b88;box-sizing:border-box"></div>
<div class="a" style="left:7px;top:729px;width:8px;height:2px;background:#4d4d4d;"></div>
<div class="a" style="left:7px;top:737px;width:2px;height:143px;background:#9a9a9a;"></div>
<div class="a" style="left:7px;top:878px;width:6px;height:2px;background:#9a9a9a;"></div>
<div class="a" style="left:24px;top:745px;width:2px;height:2px;background:#8a8a8a;"></div>
<div class="a" style="left:24px;top:762px;width:2px;height:2px;background:#8a8a8a;"></div>
<div class="a" style="left:24px;top:774px;width:2px;height:2px;background:#8a8a8a;"></div>
<div class="a" style="left:24px;top:785px;width:2px;height:2px;background:#8a8a8a;"></div>
<div class="a" style="left:24px;top:797px;width:2px;height:2px;background:#8a8a8a;"></div>
<div class="a" style="left:24px;top:808px;width:2px;height:2px;background:#8a8a8a;"></div>
<div class="a" style="left:24px;top:820px;width:2px;height:2px;background:#8a8a8a;"></div>
<div class="a" style="left:24px;top:831px;width:2px;height:2px;background:#8a8a8a;"></div>
<div class="a" style="left:24px;top:848px;width:2px;height:2px;background:#8a8a8a;"></div>
<div class="a" style="left:24px;top:860px;width:2px;height:2px;background:#8a8a8a;"></div>
<div class="a" style="left:24px;top:871px;width:2px;height:2px;background:#8a8a8a;"></div>
<div class="a" style="left:2px;top:899px;width:17px;height:17px;border:1px solid #747b88;box-sizing:border-box"></div>
<div class="a" style="left:7px;top:908px;width:8px;height:2px;background:#4d4d4d;"></div>
<div class="a" style="left:7px;top:916px;width:2px;height:107px;background:#9a9a9a;"></div>
<div class="a" style="left:24px;top:924px;width:2px;height:2px;background:#8a8a8a;"></div>
<div class="a" style="left:24px;top:941px;width:2px;height:2px;background:#8a8a8a;"></div>
<div class="a" style="left:24px;top:953px;width:2px;height:2px;background:#8a8a8a;"></div>
<div class="a" style="left:24px;top:964px;width:2px;height:2px;background:#8a8a8a;"></div>
<div class="a" style="left:24px;top:976px;width:2px;height:2px;background:#8a8a8a;"></div>
<div class="a" style="left:24px;top:987px;width:2px;height:2px;background:#8a8a8a;"></div>
<div class="a" style="left:24px;top:999px;width:2px;height:2px;background:#8a8a8a;"></div>
<div class="a" style="left:24px;top:1010px;width:2px;height:2px;background:#8a8a8a;"></div>
<div class="a" style="left:24px;top:1027px;width:2px;height:2px;background:#8a8a8a;"></div>
<div class="a" style="left:0;top:0;width:1920px;height:1080px;clip-path:inset(156px 26px 57px 65px)">
<div class="a" style="left:65px;top:156px;width:1829px;height:115px;background:#2f739c;"></div>
<div class="a" style="left:65px;top:289px;width:1829px;height:18px;background:#2f739c;"></div>
<div class="t" style="top:161.69px;font-size:17.5px;color:#ffffff;font-weight:700;left:73.3px;transform:scaleX(1.0365);transform-origin:0 0;">Tariff</div>
<div class="t" style="top:186.39px;font-size:11px;color:#ffffff;left:110.6px;transform:scaleX(1.1575);transform-origin:0 0;">Model period ending</div>
<div class="t" style="top:204.39px;font-size:11px;color:#ffffff;left:110.6px;transform:scaleX(1.1000);transform-origin:0 0;">Project phase label</div>
<div class="t" style="top:222.39px;font-size:11px;color:#ffffff;left:110.6px;transform:scaleX(1.1443);transform-origin:0 0;">Model timeline label</div>
<div class="t" style="top:240.39px;font-size:11px;color:#ffffff;font-weight:700;left:110.6px;transform:scaleX(1.0046);transform-origin:0 0;">Financial year ending</div>
<div class="t" style="top:258.39px;font-size:11px;color:#ffffff;font-weight:700;left:110.6px;transform:scaleX(1.0383);transform-origin:0 0;">Model Label</div>
<div class="a" style="left:485px;top:181px;width:92px;height:55px;border:1px dotted #fff;box-sizing:border-box"></div>
<div class="a" style="left:485px;top:199px;width:92px;height:1px;border-top:1px dotted #fff;box-sizing:border-box"></div>
<div class="a" style="left:485px;top:217px;width:92px;height:1px;border-top:1px dotted #fff;box-sizing:border-box"></div>
<div class="t" style="top:186.39px;font-size:11px;color:#ffffff;right:1352px;transform:scaleX(1.1194);transform-origin:100% 0;">-</div>
<div class="t" style="top:186.39px;font-size:11px;color:#ffffff;font-style:italic;left:582.5px;transform:scaleX(1.0619);transform-origin:0 0;">No Errors</div>
<div class="t" style="top:204.39px;font-size:11px;color:#ffffff;right:1352px;transform:scaleX(1.1194);transform-origin:100% 0;">-</div>
<div class="t" style="top:204.39px;font-size:11px;color:#ffffff;font-style:italic;left:582.5px;transform:scaleX(1.0711);transform-origin:0 0;">No Alerts</div>
<div class="t" style="top:222.39px;font-size:11px;color:#ffffff;right:1352px;transform:scaleX(1.1194);transform-origin:100% 0;">-</div>
<div class="t" style="top:222.39px;font-size:11px;color:#ffffff;font-style:italic;left:582.5px;transform:scaleX(0.9946);transform-origin:0 0;">No Changes</div>
<div class="t" style="top:240.39px;font-size:11px;color:#ffffff;font-weight:700;right:1175px;transform:scaleX(1.1442);transform-origin:100% 0;">2020</div>
<div class="t" style="top:240.39px;font-size:11px;color:#ffffff;font-weight:700;right:1083px;transform:scaleX(1.0897);transform-origin:100% 0;">&lt;&gt;</div>
<div class="t" style="top:258.39px;font-size:11px;color:#ffffff;font-weight:700;right:1349.5px;transform:scaleX(1.0280);transform-origin:100% 0;">Constant</div>
<div class="t" style="top:258.39px;font-size:11px;color:#ffffff;font-weight:700;left:582.5px;transform:scaleX(1.0756);transform-origin:0 0;">Unit</div>
<div class="t" style="top:258.39px;font-size:11px;color:#ffffff;font-weight:700;right:1174.2px;transform:scaleX(1.0148);transform-origin:100% 0;">FY Total</div>
<div class="t" style="top:258.39px;font-size:11px;color:#ffffff;font-weight:700;right:1083px;transform:scaleX(1.0148);transform-origin:100% 0;">FY Total</div>
<div class="a" style="left:861px;top:199px;width:89px;height:18px;background:#95d3cb;"></div>
<div class="a" style="left:861px;top:217px;width:89px;height:18px;background:#e8e2dd;"></div>
<div class="t" style="top:186.39px;font-size:11px;color:#ffffff;font-weight:700;right:976.3px;transform:scaleX(1.1168);transform-origin:100% 0;">31 Mar 19</div>
<div class="t" style="top:204.39px;font-size:11px;color:#000;font-weight:700;right:975px;transform:scaleX(1.0154);transform-origin:100% 0;">Prior Ops.</div>
<div class="t" style="top:222.39px;font-size:11px;color:#000;font-weight:700;right:972.5px;transform:scaleX(0.9815);transform-origin:100% 0;">Actuals</div>
<div class="t" style="top:240.39px;font-size:11px;color:#ffffff;font-weight:700;right:976.3px;transform:scaleX(1.1442);transform-origin:100% 0;">2019</div>
<div class="t" style="top:258.39px;font-size:11px;color:#ffffff;font-weight:700;right:976.3px;transform:scaleX(1.1442);transform-origin:100% 0;">1</div>
<div class="a" style="left:950px;top:199px;width:89px;height:18px;background:#95d3cb;"></div>
<div class="a" style="left:950px;top:217px;width:89px;height:18px;background:#e8e2dd;"></div>
<div class="t" style="top:186.39px;font-size:11px;color:#ffffff;font-weight:700;right:887.3px;transform:scaleX(1.0570);transform-origin:100% 0;">30 Jun 19</div>
<div class="t" style="top:204.39px;font-size:11px;color:#000;font-weight:700;right:886px;transform:scaleX(1.0154);transform-origin:100% 0;">Prior Ops.</div>
<div class="t" style="top:222.39px;font-size:11px;color:#000;font-weight:700;right:883.5px;transform:scaleX(0.9815);transform-origin:100% 0;">Actuals</div>
<div class="t" style="top:240.39px;font-size:11px;color:#ffffff;font-weight:700;right:887.3px;transform:scaleX(1.1442);transform-origin:100% 0;">2019</div>
<div class="t" style="top:258.39px;font-size:11px;color:#ffffff;font-weight:700;right:887.3px;transform:scaleX(1.1442);transform-origin:100% 0;">2</div>
<div class="a" style="left:1039px;top:199px;width:89px;height:18px;background:#95d3cb;"></div>
<div class="a" style="left:1039px;top:217px;width:89px;height:18px;background:#e8e2dd;"></div>
<div class="t" style="top:186.39px;font-size:11px;color:#ffffff;font-weight:700;right:798.3px;transform:scaleX(1.0639);transform-origin:100% 0;">30 Sep 19</div>
<div class="t" style="top:204.39px;font-size:11px;color:#000;font-weight:700;right:797px;transform:scaleX(1.0154);transform-origin:100% 0;">Prior Ops.</div>
<div class="t" style="top:222.39px;font-size:11px;color:#000;font-weight:700;right:794.5px;transform:scaleX(0.9815);transform-origin:100% 0;">Actuals</div>
<div class="t" style="top:240.39px;font-size:11px;color:#ffffff;font-weight:700;right:798.3px;transform:scaleX(1.1442);transform-origin:100% 0;">2019</div>
<div class="t" style="top:258.39px;font-size:11px;color:#ffffff;font-weight:700;right:798.3px;transform:scaleX(1.1442);transform-origin:100% 0;">3</div>
<div class="a" style="left:1128px;top:199px;width:89px;height:18px;background:#95d3cb;"></div>
<div class="a" style="left:1128px;top:217px;width:89px;height:18px;background:#e8e2dd;"></div>
<div class="t" style="top:186.39px;font-size:11px;color:#ffffff;font-weight:700;right:709.3px;transform:scaleX(1.0638);transform-origin:100% 0;">31 Dec 19</div>
<div class="t" style="top:204.39px;font-size:11px;color:#000;font-weight:700;right:708px;transform:scaleX(1.0154);transform-origin:100% 0;">Prior Ops.</div>
<div class="t" style="top:222.39px;font-size:11px;color:#000;font-weight:700;right:705.5px;transform:scaleX(0.9815);transform-origin:100% 0;">Actuals</div>
<div class="t" style="top:240.39px;font-size:11px;color:#ffffff;font-weight:700;right:709.3px;transform:scaleX(1.1442);transform-origin:100% 0;">2019</div>
<div class="t" style="top:258.39px;font-size:11px;color:#ffffff;font-weight:700;right:709.3px;transform:scaleX(1.1442);transform-origin:100% 0;">4</div>
<div class="a" style="left:1217px;top:199px;width:89px;height:18px;background:#47b2b8;"></div>
<div class="a" style="left:1217px;top:217px;width:89px;height:18px;background:#4dd1e2;"></div>
<div class="t" style="top:186.39px;font-size:11px;color:#ffffff;font-weight:700;right:620.3px;transform:scaleX(1.1168);transform-origin:100% 0;">31 Mar 20</div>
<div class="t" style="top:204.39px;font-size:11px;color:#000;font-weight:700;right:619px;transform:scaleX(1.0352);transform-origin:100% 0;">New Const.</div>
<div class="t" style="top:222.39px;font-size:11px;color:#000;font-weight:700;right:617px;transform:scaleX(1.0032);transform-origin:100% 0;">Forecast</div>
<div class="t" style="top:240.39px;font-size:11px;color:#ffffff;font-weight:700;right:620.3px;transform:scaleX(1.1442);transform-origin:100% 0;">2020</div>
<div class="t" style="top:258.39px;font-size:11px;color:#ffffff;font-weight:700;right:620.3px;transform:scaleX(1.1442);transform-origin:100% 0;">5</div>
<div class="a" style="left:1306px;top:199px;width:89px;height:18px;background:#47b2b8;"></div>
<div class="a" style="left:1306px;top:217px;width:89px;height:18px;background:#4dd1e2;"></div>
<div class="t" style="top:186.39px;font-size:11px;color:#ffffff;font-weight:700;right:531.3px;transform:scaleX(1.0570);transform-origin:100% 0;">30 Jun 20</div>
<div class="t" style="top:204.39px;font-size:11px;color:#000;font-weight:700;right:530px;transform:scaleX(1.0352);transform-origin:100% 0;">New Const.</div>
<div class="t" style="top:222.39px;font-size:11px;color:#000;font-weight:700;right:528px;transform:scaleX(1.0032);transform-origin:100% 0;">Forecast</div>
<div class="t" style="top:240.39px;font-size:11px;color:#ffffff;font-weight:700;right:531.3px;transform:scaleX(1.1442);transform-origin:100% 0;">2020</div>
<div class="t" style="top:258.39px;font-size:11px;color:#ffffff;font-weight:700;right:531.3px;transform:scaleX(1.1442);transform-origin:100% 0;">6</div>
<div class="a" style="left:1395px;top:199px;width:89px;height:18px;background:#47b2b8;"></div>
<div class="a" style="left:1395px;top:217px;width:89px;height:18px;background:#4dd1e2;"></div>
<div class="t" style="top:186.39px;font-size:11px;color:#ffffff;font-weight:700;right:442.29999999999995px;transform:scaleX(1.0639);transform-origin:100% 0;">30 Sep 20</div>
<div class="t" style="top:204.39px;font-size:11px;color:#000;font-weight:700;right:441px;transform:scaleX(1.0352);transform-origin:100% 0;">New Const.</div>
<div class="t" style="top:222.39px;font-size:11px;color:#000;font-weight:700;right:439px;transform:scaleX(1.0032);transform-origin:100% 0;">Forecast</div>
<div class="t" style="top:240.39px;font-size:11px;color:#ffffff;font-weight:700;right:442.29999999999995px;transform:scaleX(1.1442);transform-origin:100% 0;">2020</div>
<div class="t" style="top:258.39px;font-size:11px;color:#ffffff;font-weight:700;right:442.29999999999995px;transform:scaleX(1.1442);transform-origin:100% 0;">7</div>
<div class="a" style="left:1484px;top:199px;width:89px;height:18px;background:#47b2b8;"></div>
<div class="a" style="left:1484px;top:217px;width:89px;height:18px;background:#4dd1e2;"></div>
<div class="t" style="top:186.39px;font-size:11px;color:#ffffff;font-weight:700;right:353.29999999999995px;transform:scaleX(1.0638);transform-origin:100% 0;">31 Dec 20</div>
<div class="t" style="top:204.39px;font-size:11px;color:#000;font-weight:700;right:352px;transform:scaleX(1.0352);transform-origin:100% 0;">New Const.</div>
<div class="t" style="top:222.39px;font-size:11px;color:#000;font-weight:700;right:350px;transform:scaleX(1.0032);transform-origin:100% 0;">Forecast</div>
<div class="t" style="top:240.39px;font-size:11px;color:#ffffff;font-weight:700;right:353.29999999999995px;transform:scaleX(1.1442);transform-origin:100% 0;">2020</div>
<div class="t" style="top:258.39px;font-size:11px;color:#ffffff;font-weight:700;right:353.29999999999995px;transform:scaleX(1.1442);transform-origin:100% 0;">8</div>
<div class="a" style="left:1573px;top:199px;width:89px;height:18px;background:#46abcc;"></div>
<div class="a" style="left:1573px;top:217px;width:89px;height:18px;background:#4dd1e2;"></div>
<div class="t" style="top:186.39px;font-size:11px;color:#ffffff;font-weight:700;right:264.29999999999995px;transform:scaleX(1.1168);transform-origin:100% 0;">31 Mar 21</div>
<div class="t" style="top:204.39px;font-size:11px;color:#000;font-weight:700;right:263px;transform:scaleX(0.9816);transform-origin:100% 0;">Ops.</div>
<div class="t" style="top:222.39px;font-size:11px;color:#000;font-weight:700;right:261px;transform:scaleX(1.0032);transform-origin:100% 0;">Forecast</div>
<div class="t" style="top:240.39px;font-size:11px;color:#ffffff;font-weight:700;right:264.29999999999995px;transform:scaleX(1.1442);transform-origin:100% 0;">2021</div>
<div class="t" style="top:258.39px;font-size:11px;color:#ffffff;font-weight:700;right:264.29999999999995px;transform:scaleX(1.1442);transform-origin:100% 0;">9</div>
<div class="a" style="left:1662px;top:199px;width:89px;height:18px;background:#46abcc;"></div>
<div class="a" style="left:1662px;top:217px;width:89px;height:18px;background:#4dd1e2;"></div>
<div class="t" style="top:186.39px;font-size:11px;color:#ffffff;font-weight:700;right:175.29999999999995px;transform:scaleX(1.0570);transform-origin:100% 0;">30 Jun 21</div>
<div class="t" style="top:204.39px;font-size:11px;color:#000;font-weight:700;right:174px;transform:scaleX(0.9816);transform-origin:100% 0;">Ops.</div>
<div class="t" style="top:222.39px;font-size:11px;color:#000;font-weight:700;right:172px;transform:scaleX(1.0032);transform-origin:100% 0;">Forecast</div>
<div class="t" style="top:240.39px;font-size:11px;color:#ffffff;font-weight:700;right:175.29999999999995px;transform:scaleX(1.1442);transform-origin:100% 0;">2021</div>
<div class="t" style="top:258.39px;font-size:11px;color:#ffffff;font-weight:700;right:175.29999999999995px;transform:scaleX(1.1442);transform-origin:100% 0;">10</div>
<div class="a" style="left:1751px;top:199px;width:89px;height:18px;background:#46abcc;"></div>
<div class="a" style="left:1751px;top:217px;width:89px;height:18px;background:#4dd1e2;"></div>
<div class="t" style="top:186.39px;font-size:11px;color:#ffffff;font-weight:700;right:86.29999999999995px;transform:scaleX(1.0639);transform-origin:100% 0;">30 Sep 21</div>
<div class="t" style="top:204.39px;font-size:11px;color:#000;font-weight:700;right:85px;transform:scaleX(0.9816);transform-origin:100% 0;">Ops.</div>
<div class="t" style="top:222.39px;font-size:11px;color:#000;font-weight:700;right:83px;transform:scaleX(1.0032);transform-origin:100% 0;">Forecast</div>
<div class="t" style="top:240.39px;font-size:11px;color:#ffffff;font-weight:700;right:86.29999999999995px;transform:scaleX(1.1442);transform-origin:100% 0;">2021</div>
<div class="t" style="top:258.39px;font-size:11px;color:#ffffff;font-weight:700;right:86.29999999999995px;transform:scaleX(1.2039);transform-origin:100% 0;">11</div>
<div class="a" style="left:1840px;top:199px;width:89px;height:18px;background:#46abcc;"></div>
<div class="a" style="left:1840px;top:217px;width:89px;height:18px;background:#4dd1e2;"></div>
<div class="t" style="top:186.39px;font-size:11px;color:#ffffff;font-weight:700;right:-2.7000000000000455px;transform:scaleX(1.0638);transform-origin:100% 0;">31 Dec 21</div>
<div class="t" style="top:204.39px;font-size:11px;color:#000;font-weight:700;right:-4px;transform:scaleX(0.9816);transform-origin:100% 0;">Ops.</div>
<div class="t" style="top:222.39px;font-size:11px;color:#000;font-weight:700;right:-6px;transform:scaleX(1.0032);transform-origin:100% 0;">Forecast</div>
<div class="t" style="top:240.39px;font-size:11px;color:#ffffff;font-weight:700;right:-2.7000000000000455px;transform:scaleX(1.1442);transform-origin:100% 0;">2021</div>
<div class="t" style="top:258.39px;font-size:11px;color:#ffffff;font-weight:700;right:-2.7000000000000455px;transform:scaleX(1.1442);transform-origin:100% 0;">12</div>
<div class="a" style="left:0px;top:271px;width:1894px;height:1px;background:#9b9b9b;"></div>
<div class="a" style="left:861px;top:156px;width:1px;height:867px;background:#9b9b9b;"></div>
<div class="t" style="top:294.39px;font-size:11px;color:#ffffff;font-weight:700;left:70.7px;transform:scaleX(0.9700);transform-origin:0 0;">1. TARIFF</div>
<div class="t" style="top:330.39px;font-size:11px;color:#000;font-weight:700;left:70.8px;transform:scaleX(0.9644);transform-origin:0 0;">1.1. REVENUE TARIFF - EXISTING TERMINAL [ IM ]</div>
<div class="t" style="top:366.39px;font-size:11px;color:#000;font-weight:700;left:80.8px;transform:scaleX(1.0495);transform-origin:0 0;">1.1.1. Tariff - Container revenue - Existing terminal</div>
<div class="t" style="top:384.39px;font-size:11px;color:#0000ff;left:110.3px;transform:scaleX(1.1252);transform-origin:0 0;">Tariff - Container revenue - Existing terminal - Transshipment</div>
<div class="t" style="top:384.39px;font-size:11px;color:#0000ff;right:1351.8px;transform:scaleX(1.1194);transform-origin:100% 0;">-</div>
<div class="t" style="top:384.39px;font-size:11px;color:#0000ff;left:582.5px;transform:scaleX(0.9779);transform-origin:0 0;">USD / TEU</div>
<div class="t" style="top:384.39px;font-size:11px;color:#0000ff;right:1176.8px;transform:scaleX(1.1194);transform-origin:100% 0;">-</div>
<div class="t" style="top:384.39px;font-size:11px;color:#0000ff;right:1085.8px;transform:scaleX(1.1194);transform-origin:100% 0;">-</div>
<div class="t" style="top:384.39px;font-size:11px;color:#0000ff;right:1066.8px;transform:scaleX(1.1194);transform-origin:100% 0;">-</div>
<div class="t" style="top:384.39px;font-size:11px;color:#0000ff;right:977.8px;transform:scaleX(1.1194);transform-origin:100% 0;">-</div>
<div class="t" style="top:384.39px;font-size:11px;color:#0000ff;right:888.8px;transform:scaleX(1.1194);transform-origin:100% 0;">-</div>
<div class="t" style="top:384.39px;font-size:11px;color:#0000ff;right:799.8px;transform:scaleX(1.1194);transform-origin:100% 0;">-</div>
<div class="t" style="top:384.39px;font-size:11px;color:#0000ff;right:710.8px;transform:scaleX(1.1194);transform-origin:100% 0;">-</div>
<div class="t" style="top:384.39px;font-size:11px;color:#0000ff;right:619.3px;transform:scaleX(1.1730);transform-origin:100% 0;">310</div>
<div class="t" style="top:384.39px;font-size:11px;color:#0000ff;right:530.3px;transform:scaleX(1.1730);transform-origin:100% 0;">310</div>
<div class="t" style="top:384.39px;font-size:11px;color:#0000ff;right:441.29999999999995px;transform:scaleX(1.1730);transform-origin:100% 0;">310</div>
<div class="t" style="top:384.39px;font-size:11px;color:#0000ff;right:352.29999999999995px;transform:scaleX(1.1730);transform-origin:100% 0;">310</div>
<div class="t" style="top:384.39px;font-size:11px;color:#0000ff;right:263.29999999999995px;transform:scaleX(1.1730);transform-origin:100% 0;">310</div>
<div class="t" style="top:384.39px;font-size:11px;color:#0000ff;right:174.29999999999995px;transform:scaleX(1.1730);transform-origin:100% 0;">310</div>
<div class="t" style="top:384.39px;font-size:11px;color:#0000ff;right:85.29999999999995px;transform:scaleX(1.1730);transform-origin:100% 0;">310</div>
<div class="t" style="top:401.39px;font-size:11px;color:#0000ff;left:110.3px;transform:scaleX(1.1191);transform-origin:0 0;">Tariff - Container revenue - Existing terminal - Domestic</div>
<div class="t" style="top:401.39px;font-size:11px;color:#0000ff;right:1351.8px;transform:scaleX(1.1194);transform-origin:100% 0;">-</div>
<div class="t" style="top:401.39px;font-size:11px;color:#0000ff;left:582.5px;transform:scaleX(0.9779);transform-origin:0 0;">USD / TEU</div>
<div class="t" style="top:401.39px;font-size:11px;color:#0000ff;right:1176.8px;transform:scaleX(1.1194);transform-origin:100% 0;">-</div>
<div class="t" style="top:401.39px;font-size:11px;color:#0000ff;right:1085.8px;transform:scaleX(1.1194);transform-origin:100% 0;">-</div>
<div class="t" style="top:401.39px;font-size:11px;color:#0000ff;right:1066.8px;transform:scaleX(1.1194);transform-origin:100% 0;">-</div>
<div class="t" style="top:401.39px;font-size:11px;color:#0000ff;right:977.8px;transform:scaleX(1.1194);transform-origin:100% 0;">-</div>
<div class="t" style="top:401.39px;font-size:11px;color:#0000ff;right:888.8px;transform:scaleX(1.1194);transform-origin:100% 0;">-</div>
<div class="t" style="top:401.39px;font-size:11px;color:#0000ff;right:799.8px;transform:scaleX(1.1194);transform-origin:100% 0;">-</div>
<div class="t" style="top:401.39px;font-size:11px;color:#0000ff;right:710.8px;transform:scaleX(1.1194);transform-origin:100% 0;">-</div>
<div class="t" style="top:401.39px;font-size:11px;color:#0000ff;right:619.3px;transform:scaleX(1.1730);transform-origin:100% 0;">310</div>
<div class="t" style="top:401.39px;font-size:11px;color:#0000ff;right:530.3px;transform:scaleX(1.1730);transform-origin:100% 0;">310</div>
<div class="t" style="top:401.39px;font-size:11px;color:#0000ff;right:441.29999999999995px;transform:scaleX(1.1730);transform-origin:100% 0;">310</div>
<div class="t" style="top:401.39px;font-size:11px;color:#0000ff;right:352.29999999999995px;transform:scaleX(1.1730);transform-origin:100% 0;">310</div>
<div class="t" style="top:401.39px;font-size:11px;color:#0000ff;right:263.29999999999995px;transform:scaleX(1.1730);transform-origin:100% 0;">310</div>
<div class="t" style="top:401.39px;font-size:11px;color:#0000ff;right:174.29999999999995px;transform:scaleX(1.1730);transform-origin:100% 0;">310</div>
<div class="t" style="top:401.39px;font-size:11px;color:#0000ff;right:85.29999999999995px;transform:scaleX(1.1730);transform-origin:100% 0;">310</div>
<div class="t" style="top:424.39px;font-size:11px;color:#0000ff;left:110.3px;transform:scaleX(1.1179);transform-origin:0 0;">Phase flag - [p11]</div>
<div class="t" style="top:424.39px;font-size:11px;color:#0000ff;right:1351.8px;transform:scaleX(1.1194);transform-origin:100% 0;">-</div>
<div class="t" style="top:424.39px;font-size:11px;color:#0000ff;left:582.5px;transform:scaleX(1.1840);transform-origin:0 0;">flag</div>
<div class="t" style="top:424.39px;font-size:11px;color:#0000ff;right:1174.3px;transform:scaleX(1.1730);transform-origin:100% 0;">4</div>
<div class="t" style="top:424.39px;font-size:11px;color:#0000ff;right:1083.3px;transform:scaleX(1.1730);transform-origin:100% 0;">124</div>
<div class="t" style="top:424.39px;font-size:11px;color:#0000ff;right:1066.8px;transform:scaleX(1.1194);transform-origin:100% 0;">-</div>
<div class="t" style="top:424.39px;font-size:11px;color:#0000ff;right:976.3px;transform:scaleX(1.1730);transform-origin:100% 0;">1</div>
<div class="t" style="top:424.39px;font-size:11px;color:#0000ff;right:887.3px;transform:scaleX(1.1730);transform-origin:100% 0;">1</div>
<div class="t" style="top:424.39px;font-size:11px;color:#0000ff;right:798.3px;transform:scaleX(1.1730);transform-origin:100% 0;">1</div>
<div class="t" style="top:424.39px;font-size:11px;color:#0000ff;right:709.3px;transform:scaleX(1.1730);transform-origin:100% 0;">1</div>
<div class="t" style="top:424.39px;font-size:11px;color:#0000ff;right:620.3px;transform:scaleX(1.1730);transform-origin:100% 0;">1</div>
<div class="t" style="top:424.39px;font-size:11px;color:#0000ff;right:531.3px;transform:scaleX(1.1730);transform-origin:100% 0;">1</div>
<div class="t" style="top:424.39px;font-size:11px;color:#0000ff;right:442.29999999999995px;transform:scaleX(1.1730);transform-origin:100% 0;">1</div>
<div class="t" style="top:424.39px;font-size:11px;color:#0000ff;right:353.29999999999995px;transform:scaleX(1.1730);transform-origin:100% 0;">1</div>
<div class="t" style="top:424.39px;font-size:11px;color:#0000ff;right:264.29999999999995px;transform:scaleX(1.1730);transform-origin:100% 0;">1</div>
<div class="t" style="top:424.39px;font-size:11px;color:#0000ff;right:175.29999999999995px;transform:scaleX(1.1730);transform-origin:100% 0;">1</div>
<div class="t" style="top:424.39px;font-size:11px;color:#0000ff;right:86.29999999999995px;transform:scaleX(1.1730);transform-origin:100% 0;">1</div>
<div class="t" style="top:447.39px;font-size:11px;color:#0000ff;left:110.3px;transform:scaleX(1.1122);transform-origin:0 0;">Forecast period flag</div>
<div class="t" style="top:447.39px;font-size:11px;color:#0000ff;right:1351.8px;transform:scaleX(1.1194);transform-origin:100% 0;">-</div>
<div class="t" style="top:447.39px;font-size:11px;color:#0000ff;left:582.5px;transform:scaleX(1.1840);transform-origin:0 0;">flag</div>
<div class="t" style="top:447.39px;font-size:11px;color:#0000ff;right:1174.3px;transform:scaleX(1.1730);transform-origin:100% 0;">4</div>
<div class="t" style="top:447.39px;font-size:11px;color:#0000ff;right:1083.3px;transform:scaleX(1.1730);transform-origin:100% 0;">120</div>
<div class="t" style="top:447.39px;font-size:11px;color:#0000ff;right:1066.8px;transform:scaleX(1.1194);transform-origin:100% 0;">-</div>
<div class="t" style="top:447.39px;font-size:11px;color:#0000ff;right:977.8px;transform:scaleX(1.1194);transform-origin:100% 0;">-</div>
<div class="t" style="top:447.39px;font-size:11px;color:#0000ff;right:888.8px;transform:scaleX(1.1194);transform-origin:100% 0;">-</div>
<div class="t" style="top:447.39px;font-size:11px;color:#0000ff;right:799.8px;transform:scaleX(1.1194);transform-origin:100% 0;">-</div>
<div class="t" style="top:447.39px;font-size:11px;color:#0000ff;right:710.8px;transform:scaleX(1.1194);transform-origin:100% 0;">-</div>
<div class="t" style="top:447.39px;font-size:11px;color:#0000ff;right:620.3px;transform:scaleX(1.1730);transform-origin:100% 0;">1</div>
<div class="t" style="top:447.39px;font-size:11px;color:#0000ff;right:531.3px;transform:scaleX(1.1730);transform-origin:100% 0;">1</div>
<div class="t" style="top:447.39px;font-size:11px;color:#0000ff;right:442.29999999999995px;transform:scaleX(1.1730);transform-origin:100% 0;">1</div>
<div class="t" style="top:447.39px;font-size:11px;color:#0000ff;right:353.29999999999995px;transform:scaleX(1.1730);transform-origin:100% 0;">1</div>
<div class="t" style="top:447.39px;font-size:11px;color:#0000ff;right:264.29999999999995px;transform:scaleX(1.1730);transform-origin:100% 0;">1</div>
<div class="t" style="top:447.39px;font-size:11px;color:#0000ff;right:175.29999999999995px;transform:scaleX(1.1730);transform-origin:100% 0;">1</div>
<div class="t" style="top:447.39px;font-size:11px;color:#0000ff;right:86.29999999999995px;transform:scaleX(1.1730);transform-origin:100% 0;">1</div>
<div class="t" style="top:470.39px;font-size:11px;color:#ff0000;left:110.3px;transform:scaleX(1.1252);transform-origin:0 0;">Tariff - Container revenue - Existing terminal - Transshipment</div>
<div class="t" style="top:470.39px;font-size:11px;color:#ff0000;left:582.5px;transform:scaleX(0.9779);transform-origin:0 0;">USD / TEU</div>
<div class="t" style="top:470.39px;font-size:11px;color:#ff0000;right:1174.3px;transform:scaleX(1.1545);transform-origin:100% 0;">1,240</div>
<div class="t" style="top:470.39px;font-size:11px;color:#ff0000;right:1083.3px;transform:scaleX(1.1579);transform-origin:100% 0;">37,200</div>
<div class="t" style="top:470.39px;font-size:11px;color:#ff0000;right:977.8px;transform:scaleX(1.1194);transform-origin:100% 0;">-</div>
<div class="t" style="top:470.39px;font-size:11px;color:#ff0000;right:888.8px;transform:scaleX(1.1194);transform-origin:100% 0;">-</div>
<div class="t" style="top:470.39px;font-size:11px;color:#ff0000;right:799.8px;transform:scaleX(1.1194);transform-origin:100% 0;">-</div>
<div class="t" style="top:470.39px;font-size:11px;color:#ff0000;right:710.8px;transform:scaleX(1.1194);transform-origin:100% 0;">-</div>
<div class="t" style="top:470.39px;font-size:11px;color:#ff0000;right:619.3px;transform:scaleX(1.1730);transform-origin:100% 0;">310</div>
<div class="t" style="top:470.39px;font-size:11px;color:#ff0000;right:530.3px;transform:scaleX(1.1730);transform-origin:100% 0;">310</div>
<div class="t" style="top:470.39px;font-size:11px;color:#ff0000;right:441.29999999999995px;transform:scaleX(1.1730);transform-origin:100% 0;">310</div>
<div class="t" style="top:470.39px;font-size:11px;color:#ff0000;right:352.29999999999995px;transform:scaleX(1.1730);transform-origin:100% 0;">310</div>
<div class="t" style="top:470.39px;font-size:11px;color:#ff0000;right:263.29999999999995px;transform:scaleX(1.1730);transform-origin:100% 0;">310</div>
<div class="t" style="top:470.39px;font-size:11px;color:#ff0000;right:174.29999999999995px;transform:scaleX(1.1730);transform-origin:100% 0;">310</div>
<div class="t" style="top:470.39px;font-size:11px;color:#ff0000;right:85.29999999999995px;transform:scaleX(1.1730);transform-origin:100% 0;">310</div>
<div class="t" style="top:487.39px;font-size:11px;color:#ff0000;left:110.3px;transform:scaleX(1.1191);transform-origin:0 0;">Tariff - Container revenue - Existing terminal - Domestic</div>
<div class="t" style="top:487.39px;font-size:11px;color:#ff0000;left:582.5px;transform:scaleX(0.9779);transform-origin:0 0;">USD / TEU</div>
<div class="t" style="top:487.39px;font-size:11px;color:#ff0000;right:1174.3px;transform:scaleX(1.1545);transform-origin:100% 0;">1,240</div>
<div class="t" style="top:487.39px;font-size:11px;color:#ff0000;right:1083.3px;transform:scaleX(1.1579);transform-origin:100% 0;">37,200</div>
<div class="t" style="top:487.39px;font-size:11px;color:#ff0000;right:977.8px;transform:scaleX(1.1194);transform-origin:100% 0;">-</div>
<div class="t" style="top:487.39px;font-size:11px;color:#ff0000;right:888.8px;transform:scaleX(1.1194);transform-origin:100% 0;">-</div>
<div class="t" style="top:487.39px;font-size:11px;color:#ff0000;right:799.8px;transform:scaleX(1.1194);transform-origin:100% 0;">-</div>
<div class="t" style="top:487.39px;font-size:11px;color:#ff0000;right:710.8px;transform:scaleX(1.1194);transform-origin:100% 0;">-</div>
<div class="t" style="top:487.39px;font-size:11px;color:#ff0000;right:619.3px;transform:scaleX(1.1730);transform-origin:100% 0;">310</div>
<div class="t" style="top:487.39px;font-size:11px;color:#ff0000;right:530.3px;transform:scaleX(1.1730);transform-origin:100% 0;">310</div>
<div class="t" style="top:487.39px;font-size:11px;color:#ff0000;right:441.29999999999995px;transform:scaleX(1.1730);transform-origin:100% 0;">310</div>
<div class="t" style="top:487.39px;font-size:11px;color:#ff0000;right:352.29999999999995px;transform:scaleX(1.1730);transform-origin:100% 0;">310</div>
<div class="t" style="top:487.39px;font-size:11px;color:#ff0000;right:263.29999999999995px;transform:scaleX(1.1730);transform-origin:100% 0;">310</div>
<div class="t" style="top:487.39px;font-size:11px;color:#ff0000;right:174.29999999999995px;transform:scaleX(1.1730);transform-origin:100% 0;">310</div>
<div class="t" style="top:487.39px;font-size:11px;color:#ff0000;right:85.29999999999995px;transform:scaleX(1.1730);transform-origin:100% 0;">310</div>
<div class="a" style="left:104px;top:505px;width:1790px;height:1px;background:#7f7f7f;"></div>
<div class="a" style="left:104px;top:522px;width:1790px;height:1px;background:#7f7f7f;"></div>
<div class="t" style="top:510.39px;font-size:11px;color:#000;left:110.3px;transform:scaleX(1.1288);transform-origin:0 0;">Tariff - Container revenue - Existing terminal</div>
<div class="t" style="top:510.39px;font-size:11px;color:#000;left:582.5px;transform:scaleX(0.9779);transform-origin:0 0;">USD / TEU</div>
<div class="t" style="top:510.39px;font-size:11px;color:#000;right:1174.3px;transform:scaleX(1.1545);transform-origin:100% 0;">2,480</div>
<div class="t" style="top:510.39px;font-size:11px;color:#000;right:1083.3px;transform:scaleX(1.1579);transform-origin:100% 0;">74,400</div>
<div class="t" style="top:510.39px;font-size:11px;color:#000;right:977.8px;transform:scaleX(1.1194);transform-origin:100% 0;">-</div>
<div class="t" style="top:510.39px;font-size:11px;color:#000;right:888.8px;transform:scaleX(1.1194);transform-origin:100% 0;">-</div>
<div class="t" style="top:510.39px;font-size:11px;color:#000;right:799.8px;transform:scaleX(1.1194);transform-origin:100% 0;">-</div>
<div class="t" style="top:510.39px;font-size:11px;color:#000;right:710.8px;transform:scaleX(1.1194);transform-origin:100% 0;">-</div>
<div class="t" style="top:510.39px;font-size:11px;color:#000;right:619.3px;transform:scaleX(1.1730);transform-origin:100% 0;">620</div>
<div class="t" style="top:510.39px;font-size:11px;color:#000;right:530.3px;transform:scaleX(1.1730);transform-origin:100% 0;">620</div>
<div class="t" style="top:510.39px;font-size:11px;color:#000;right:441.29999999999995px;transform:scaleX(1.1730);transform-origin:100% 0;">620</div>
<div class="t" style="top:510.39px;font-size:11px;color:#000;right:352.29999999999995px;transform:scaleX(1.1730);transform-origin:100% 0;">620</div>
<div class="t" style="top:510.39px;font-size:11px;color:#000;right:263.29999999999995px;transform:scaleX(1.1730);transform-origin:100% 0;">620</div>
<div class="t" style="top:510.39px;font-size:11px;color:#000;right:174.29999999999995px;transform:scaleX(1.1730);transform-origin:100% 0;">620</div>
<div class="t" style="top:510.39px;font-size:11px;color:#000;right:85.29999999999995px;transform:scaleX(1.1730);transform-origin:100% 0;">620</div>
<div class="t" style="top:545.39px;font-size:11px;color:#000;font-weight:700;left:80.8px;transform:scaleX(1.0358);transform-origin:0 0;">1.1.2. Tariff - Liquid bulk revenue - Existing terminal</div>
<div class="t" style="top:563.39px;font-size:11px;color:#0000ff;left:110.3px;transform:scaleX(1.1277);transform-origin:0 0;">Tariff - Liquid bulk revenue - Existing terminal - Transshipment</div>
<div class="t" style="top:563.39px;font-size:11px;color:#0000ff;right:1351.8px;transform:scaleX(1.1194);transform-origin:100% 0;">-</div>
<div class="t" style="top:563.39px;font-size:11px;color:#0000ff;left:582.5px;transform:scaleX(1.0485);transform-origin:0 0;">USD / ton</div>
<div class="t" style="top:563.39px;font-size:11px;color:#0000ff;right:1176.8px;transform:scaleX(1.1194);transform-origin:100% 0;">-</div>
<div class="t" style="top:563.39px;font-size:11px;color:#0000ff;right:1085.8px;transform:scaleX(1.1194);transform-origin:100% 0;">-</div>
<div class="t" style="top:563.39px;font-size:11px;color:#0000ff;right:1066.8px;transform:scaleX(1.1194);transform-origin:100% 0;">-</div>
<div class="t" style="top:563.39px;font-size:11px;color:#0000ff;right:977.8px;transform:scaleX(1.1194);transform-origin:100% 0;">-</div>
<div class="t" style="top:563.39px;font-size:11px;color:#0000ff;right:888.8px;transform:scaleX(1.1194);transform-origin:100% 0;">-</div>
<div class="t" style="top:563.39px;font-size:11px;color:#0000ff;right:799.8px;transform:scaleX(1.1194);transform-origin:100% 0;">-</div>
<div class="t" style="top:563.39px;font-size:11px;color:#0000ff;right:710.8px;transform:scaleX(1.1194);transform-origin:100% 0;">-</div>
<div class="t" style="top:563.39px;font-size:11px;color:#0000ff;right:619.3px;transform:scaleX(1.1730);transform-origin:100% 0;">25</div>
<div class="t" style="top:563.39px;font-size:11px;color:#0000ff;right:530.3px;transform:scaleX(1.1730);transform-origin:100% 0;">25</div>
<div class="t" style="top:563.39px;font-size:11px;color:#0000ff;right:441.29999999999995px;transform:scaleX(1.1730);transform-origin:100% 0;">25</div>
<div class="t" style="top:563.39px;font-size:11px;color:#0000ff;right:352.29999999999995px;transform:scaleX(1.1730);transform-origin:100% 0;">25</div>
<div class="t" style="top:563.39px;font-size:11px;color:#0000ff;right:263.29999999999995px;transform:scaleX(1.1730);transform-origin:100% 0;">25</div>
<div class="t" style="top:563.39px;font-size:11px;color:#0000ff;right:174.29999999999995px;transform:scaleX(1.1730);transform-origin:100% 0;">25</div>
<div class="t" style="top:563.39px;font-size:11px;color:#0000ff;right:85.29999999999995px;transform:scaleX(1.1730);transform-origin:100% 0;">25</div>
<div class="t" style="top:580.39px;font-size:11px;color:#0000ff;left:110.3px;transform:scaleX(1.1219);transform-origin:0 0;">Tariff - Liquid bulk revenue - Existing terminal - Domestic</div>
<div class="t" style="top:580.39px;font-size:11px;color:#0000ff;right:1351.8px;transform:scaleX(1.1194);transform-origin:100% 0;">-</div>
<div class="t" style="top:580.39px;font-size:11px;color:#0000ff;left:582.5px;transform:scaleX(1.0485);transform-origin:0 0;">USD / ton</div>
<div class="t" style="top:580.39px;font-size:11px;color:#0000ff;right:1176.8px;transform:scaleX(1.1194);transform-origin:100% 0;">-</div>
<div class="t" style="top:580.39px;font-size:11px;color:#0000ff;right:1085.8px;transform:scaleX(1.1194);transform-origin:100% 0;">-</div>
<div class="t" style="top:580.39px;font-size:11px;color:#0000ff;right:1066.8px;transform:scaleX(1.1194);transform-origin:100% 0;">-</div>
<div class="t" style="top:580.39px;font-size:11px;color:#0000ff;right:977.8px;transform:scaleX(1.1194);transform-origin:100% 0;">-</div>
<div class="t" style="top:580.39px;font-size:11px;color:#0000ff;right:888.8px;transform:scaleX(1.1194);transform-origin:100% 0;">-</div>
<div class="t" style="top:580.39px;font-size:11px;color:#0000ff;right:799.8px;transform:scaleX(1.1194);transform-origin:100% 0;">-</div>
<div class="t" style="top:580.39px;font-size:11px;color:#0000ff;right:710.8px;transform:scaleX(1.1194);transform-origin:100% 0;">-</div>
<div class="t" style="top:580.39px;font-size:11px;color:#0000ff;right:619.3px;transform:scaleX(1.1730);transform-origin:100% 0;">25</div>
<div class="t" style="top:580.39px;font-size:11px;color:#0000ff;right:530.3px;transform:scaleX(1.1730);transform-origin:100% 0;">25</div>
<div class="t" style="top:580.39px;font-size:11px;color:#0000ff;right:441.29999999999995px;transform:scaleX(1.1730);transform-origin:100% 0;">25</div>
<div class="t" style="top:580.39px;font-size:11px;color:#0000ff;right:352.29999999999995px;transform:scaleX(1.1730);transform-origin:100% 0;">25</div>
<div class="t" style="top:580.39px;font-size:11px;color:#0000ff;right:263.29999999999995px;transform:scaleX(1.1730);transform-origin:100% 0;">25</div>
<div class="t" style="top:580.39px;font-size:11px;color:#0000ff;right:174.29999999999995px;transform:scaleX(1.1730);transform-origin:100% 0;">25</div>
<div class="t" style="top:580.39px;font-size:11px;color:#0000ff;right:85.29999999999995px;transform:scaleX(1.1730);transform-origin:100% 0;">25</div>
<div class="t" style="top:603.39px;font-size:11px;color:#0000ff;left:110.3px;transform:scaleX(1.1179);transform-origin:0 0;">Phase flag - [p11]</div>
<div class="t" style="top:603.39px;font-size:11px;color:#0000ff;right:1351.8px;transform:scaleX(1.1194);transform-origin:100% 0;">-</div>
<div class="t" style="top:603.39px;font-size:11px;color:#0000ff;left:582.5px;transform:scaleX(1.1840);transform-origin:0 0;">flag</div>
<div class="t" style="top:603.39px;font-size:11px;color:#0000ff;right:1174.3px;transform:scaleX(1.1730);transform-origin:100% 0;">4</div>
<div class="t" style="top:603.39px;font-size:11px;color:#0000ff;right:1083.3px;transform:scaleX(1.1730);transform-origin:100% 0;">124</div>
<div class="t" style="top:603.39px;font-size:11px;color:#0000ff;right:1066.8px;transform:scaleX(1.1194);transform-origin:100% 0;">-</div>
<div class="t" style="top:603.39px;font-size:11px;color:#0000ff;right:976.3px;transform:scaleX(1.1730);transform-origin:100% 0;">1</div>
<div class="t" style="top:603.39px;font-size:11px;color:#0000ff;right:887.3px;transform:scaleX(1.1730);transform-origin:100% 0;">1</div>
<div class="t" style="top:603.39px;font-size:11px;color:#0000ff;right:798.3px;transform:scaleX(1.1730);transform-origin:100% 0;">1</div>
<div class="t" style="top:603.39px;font-size:11px;color:#0000ff;right:709.3px;transform:scaleX(1.1730);transform-origin:100% 0;">1</div>
<div class="t" style="top:603.39px;font-size:11px;color:#0000ff;right:620.3px;transform:scaleX(1.1730);transform-origin:100% 0;">1</div>
<div class="t" style="top:603.39px;font-size:11px;color:#0000ff;right:531.3px;transform:scaleX(1.1730);transform-origin:100% 0;">1</div>
<div class="t" style="top:603.39px;font-size:11px;color:#0000ff;right:442.29999999999995px;transform:scaleX(1.1730);transform-origin:100% 0;">1</div>
<div class="t" style="top:603.39px;font-size:11px;color:#0000ff;right:353.29999999999995px;transform:scaleX(1.1730);transform-origin:100% 0;">1</div>
<div class="t" style="top:603.39px;font-size:11px;color:#0000ff;right:264.29999999999995px;transform:scaleX(1.1730);transform-origin:100% 0;">1</div>
<div class="t" style="top:603.39px;font-size:11px;color:#0000ff;right:175.29999999999995px;transform:scaleX(1.1730);transform-origin:100% 0;">1</div>
<div class="t" style="top:603.39px;font-size:11px;color:#0000ff;right:86.29999999999995px;transform:scaleX(1.1730);transform-origin:100% 0;">1</div>
<div class="t" style="top:626.39px;font-size:11px;color:#0000ff;left:110.3px;transform:scaleX(1.1122);transform-origin:0 0;">Forecast period flag</div>
<div class="t" style="top:626.39px;font-size:11px;color:#0000ff;right:1351.8px;transform:scaleX(1.1194);transform-origin:100% 0;">-</div>
<div class="t" style="top:626.39px;font-size:11px;color:#0000ff;left:582.5px;transform:scaleX(1.1840);transform-origin:0 0;">flag</div>
<div class="t" style="top:626.39px;font-size:11px;color:#0000ff;right:1174.3px;transform:scaleX(1.1730);transform-origin:100% 0;">4</div>
<div class="t" style="top:626.39px;font-size:11px;color:#0000ff;right:1083.3px;transform:scaleX(1.1730);transform-origin:100% 0;">120</div>
<div class="t" style="top:626.39px;font-size:11px;color:#0000ff;right:1066.8px;transform:scaleX(1.1194);transform-origin:100% 0;">-</div>
<div class="t" style="top:626.39px;font-size:11px;color:#0000ff;right:977.8px;transform:scaleX(1.1194);transform-origin:100% 0;">-</div>
<div class="t" style="top:626.39px;font-size:11px;color:#0000ff;right:888.8px;transform:scaleX(1.1194);transform-origin:100% 0;">-</div>
<div class="t" style="top:626.39px;font-size:11px;color:#0000ff;right:799.8px;transform:scaleX(1.1194);transform-origin:100% 0;">-</div>
<div class="t" style="top:626.39px;font-size:11px;color:#0000ff;right:710.8px;transform:scaleX(1.1194);transform-origin:100% 0;">-</div>
<div class="t" style="top:626.39px;font-size:11px;color:#0000ff;right:620.3px;transform:scaleX(1.1730);transform-origin:100% 0;">1</div>
<div class="t" style="top:626.39px;font-size:11px;color:#0000ff;right:531.3px;transform:scaleX(1.1730);transform-origin:100% 0;">1</div>
<div class="t" style="top:626.39px;font-size:11px;color:#0000ff;right:442.29999999999995px;transform:scaleX(1.1730);transform-origin:100% 0;">1</div>
<div class="t" style="top:626.39px;font-size:11px;color:#0000ff;right:353.29999999999995px;transform:scaleX(1.1730);transform-origin:100% 0;">1</div>
<div class="t" style="top:626.39px;font-size:11px;color:#0000ff;right:264.29999999999995px;transform:scaleX(1.1730);transform-origin:100% 0;">1</div>
<div class="t" style="top:626.39px;font-size:11px;color:#0000ff;right:175.29999999999995px;transform:scaleX(1.1730);transform-origin:100% 0;">1</div>
<div class="t" style="top:626.39px;font-size:11px;color:#0000ff;right:86.29999999999995px;transform:scaleX(1.1730);transform-origin:100% 0;">1</div>
<div class="t" style="top:649.39px;font-size:11px;color:#ff0000;left:110.3px;transform:scaleX(1.1277);transform-origin:0 0;">Tariff - Liquid bulk revenue - Existing terminal - Transshipment</div>
<div class="t" style="top:649.39px;font-size:11px;color:#ff0000;left:582.5px;transform:scaleX(1.0485);transform-origin:0 0;">USD / ton</div>
<div class="t" style="top:649.39px;font-size:11px;color:#ff0000;right:1174.3px;transform:scaleX(1.1730);transform-origin:100% 0;">100</div>
<div class="t" style="top:649.39px;font-size:11px;color:#ff0000;right:1083.3px;transform:scaleX(1.1545);transform-origin:100% 0;">3,000</div>
<div class="t" style="top:649.39px;font-size:11px;color:#ff0000;right:977.8px;transform:scaleX(1.1194);transform-origin:100% 0;">-</div>
<div class="t" style="top:649.39px;font-size:11px;color:#ff0000;right:888.8px;transform:scaleX(1.1194);transform-origin:100% 0;">-</div>
<div class="t" style="top:649.39px;font-size:11px;color:#ff0000;right:799.8px;transform:scaleX(1.1194);transform-origin:100% 0;">-</div>
<div class="t" style="top:649.39px;font-size:11px;color:#ff0000;right:710.8px;transform:scaleX(1.1194);transform-origin:100% 0;">-</div>
<div class="t" style="top:649.39px;font-size:11px;color:#ff0000;right:619.3px;transform:scaleX(1.1730);transform-origin:100% 0;">25</div>
<div class="t" style="top:649.39px;font-size:11px;color:#ff0000;right:530.3px;transform:scaleX(1.1730);transform-origin:100% 0;">25</div>
<div class="t" style="top:649.39px;font-size:11px;color:#ff0000;right:441.29999999999995px;transform:scaleX(1.1730);transform-origin:100% 0;">25</div>
<div class="t" style="top:649.39px;font-size:11px;color:#ff0000;right:352.29999999999995px;transform:scaleX(1.1730);transform-origin:100% 0;">25</div>
<div class="t" style="top:649.39px;font-size:11px;color:#ff0000;right:263.29999999999995px;transform:scaleX(1.1730);transform-origin:100% 0;">25</div>
<div class="t" style="top:649.39px;font-size:11px;color:#ff0000;right:174.29999999999995px;transform:scaleX(1.1730);transform-origin:100% 0;">25</div>
<div class="t" style="top:649.39px;font-size:11px;color:#ff0000;right:85.29999999999995px;transform:scaleX(1.1730);transform-origin:100% 0;">25</div>
<div class="t" style="top:666.39px;font-size:11px;color:#ff0000;left:110.3px;transform:scaleX(1.1219);transform-origin:0 0;">Tariff - Liquid bulk revenue - Existing terminal - Domestic</div>
<div class="t" style="top:666.39px;font-size:11px;color:#ff0000;left:582.5px;transform:scaleX(1.0485);transform-origin:0 0;">USD / ton</div>
<div class="t" style="top:666.39px;font-size:11px;color:#ff0000;right:1174.3px;transform:scaleX(1.1730);transform-origin:100% 0;">100</div>
<div class="t" style="top:666.39px;font-size:11px;color:#ff0000;right:1083.3px;transform:scaleX(1.1545);transform-origin:100% 0;">3,000</div>
<div class="t" style="top:666.39px;font-size:11px;color:#ff0000;right:977.8px;transform:scaleX(1.1194);transform-origin:100% 0;">-</div>
<div class="t" style="top:666.39px;font-size:11px;color:#ff0000;right:888.8px;transform:scaleX(1.1194);transform-origin:100% 0;">-</div>
<div class="t" style="top:666.39px;font-size:11px;color:#ff0000;right:799.8px;transform:scaleX(1.1194);transform-origin:100% 0;">-</div>
<div class="t" style="top:666.39px;font-size:11px;color:#ff0000;right:710.8px;transform:scaleX(1.1194);transform-origin:100% 0;">-</div>
<div class="t" style="top:666.39px;font-size:11px;color:#ff0000;right:619.3px;transform:scaleX(1.1730);transform-origin:100% 0;">25</div>
<div class="t" style="top:666.39px;font-size:11px;color:#ff0000;right:530.3px;transform:scaleX(1.1730);transform-origin:100% 0;">25</div>
<div class="t" style="top:666.39px;font-size:11px;color:#ff0000;right:441.29999999999995px;transform:scaleX(1.1730);transform-origin:100% 0;">25</div>
<div class="t" style="top:666.39px;font-size:11px;color:#ff0000;right:352.29999999999995px;transform:scaleX(1.1730);transform-origin:100% 0;">25</div>
<div class="t" style="top:666.39px;font-size:11px;color:#ff0000;right:263.29999999999995px;transform:scaleX(1.1730);transform-origin:100% 0;">25</div>
<div class="t" style="top:666.39px;font-size:11px;color:#ff0000;right:174.29999999999995px;transform:scaleX(1.1730);transform-origin:100% 0;">25</div>
<div class="t" style="top:666.39px;font-size:11px;color:#ff0000;right:85.29999999999995px;transform:scaleX(1.1730);transform-origin:100% 0;">25</div>
<div class="a" style="left:104px;top:684px;width:1790px;height:1px;background:#7f7f7f;"></div>
<div class="a" style="left:104px;top:701px;width:1790px;height:1px;background:#7f7f7f;"></div>
<div class="t" style="top:689.39px;font-size:11px;color:#000;left:110.3px;transform:scaleX(1.1321);transform-origin:0 0;">Tariff - Liquid bulk revenue - Existing terminal</div>
<div class="t" style="top:689.39px;font-size:11px;color:#000;left:582.5px;transform:scaleX(1.0485);transform-origin:0 0;">USD / ton</div>
<div class="t" style="top:689.39px;font-size:11px;color:#000;right:1174.3px;transform:scaleX(1.1730);transform-origin:100% 0;">200</div>
<div class="t" style="top:689.39px;font-size:11px;color:#000;right:1083.3px;transform:scaleX(1.1545);transform-origin:100% 0;">6,000</div>
<div class="t" style="top:689.39px;font-size:11px;color:#000;right:977.8px;transform:scaleX(1.1194);transform-origin:100% 0;">-</div>
<div class="t" style="top:689.39px;font-size:11px;color:#000;right:888.8px;transform:scaleX(1.1194);transform-origin:100% 0;">-</div>
<div class="t" style="top:689.39px;font-size:11px;color:#000;right:799.8px;transform:scaleX(1.1194);transform-origin:100% 0;">-</div>
<div class="t" style="top:689.39px;font-size:11px;color:#000;right:710.8px;transform:scaleX(1.1194);transform-origin:100% 0;">-</div>
<div class="t" style="top:689.39px;font-size:11px;color:#000;right:619.3px;transform:scaleX(1.1730);transform-origin:100% 0;">50</div>
<div class="t" style="top:689.39px;font-size:11px;color:#000;right:530.3px;transform:scaleX(1.1730);transform-origin:100% 0;">50</div>
<div class="t" style="top:689.39px;font-size:11px;color:#000;right:441.29999999999995px;transform:scaleX(1.1730);transform-origin:100% 0;">50</div>
<div class="t" style="top:689.39px;font-size:11px;color:#000;right:352.29999999999995px;transform:scaleX(1.1730);transform-origin:100% 0;">50</div>
<div class="t" style="top:689.39px;font-size:11px;color:#000;right:263.29999999999995px;transform:scaleX(1.1730);transform-origin:100% 0;">50</div>
<div class="t" style="top:689.39px;font-size:11px;color:#000;right:174.29999999999995px;transform:scaleX(1.1730);transform-origin:100% 0;">50</div>
<div class="t" style="top:689.39px;font-size:11px;color:#000;right:85.29999999999995px;transform:scaleX(1.1730);transform-origin:100% 0;">50</div>
<div class="t" style="top:724.39px;font-size:11px;color:#000;font-weight:700;left:80.8px;transform:scaleX(1.0443);transform-origin:0 0;">1.1.3. Tariff - Dry bulk revenue - Existing terminal</div>
<div class="t" style="top:742.39px;font-size:11px;color:#0000ff;left:110.3px;transform:scaleX(1.1286);transform-origin:0 0;">Tariff - Dry bulk revenue - Existing terminal - Transshipment</div>
<div class="t" style="top:742.39px;font-size:11px;color:#0000ff;right:1351.8px;transform:scaleX(1.1194);transform-origin:100% 0;">-</div>
<div class="t" style="top:742.39px;font-size:11px;color:#0000ff;left:582.5px;transform:scaleX(1.0485);transform-origin:0 0;">USD / ton</div>
<div class="t" style="top:742.39px;font-size:11px;color:#0000ff;right:1176.8px;transform:scaleX(1.1194);transform-origin:100% 0;">-</div>
<div class="t" style="top:742.39px;font-size:11px;color:#0000ff;right:1085.8px;transform:scaleX(1.1194);transform-origin:100% 0;">-</div>
<div class="t" style="top:742.39px;font-size:11px;color:#0000ff;right:1066.8px;transform:scaleX(1.1194);transform-origin:100% 0;">-</div>
<div class="t" style="top:742.39px;font-size:11px;color:#0000ff;right:977.8px;transform:scaleX(1.1194);transform-origin:100% 0;">-</div>
<div class="t" style="top:742.39px;font-size:11px;color:#0000ff;right:888.8px;transform:scaleX(1.1194);transform-origin:100% 0;">-</div>
<div class="t" style="top:742.39px;font-size:11px;color:#0000ff;right:799.8px;transform:scaleX(1.1194);transform-origin:100% 0;">-</div>
<div class="t" style="top:742.39px;font-size:11px;color:#0000ff;right:710.8px;transform:scaleX(1.1194);transform-origin:100% 0;">-</div>
<div class="t" style="top:742.39px;font-size:11px;color:#0000ff;right:619.3px;transform:scaleX(1.1730);transform-origin:100% 0;">15</div>
<div class="t" style="top:742.39px;font-size:11px;color:#0000ff;right:530.3px;transform:scaleX(1.1730);transform-origin:100% 0;">15</div>
<div class="t" style="top:742.39px;font-size:11px;color:#0000ff;right:441.29999999999995px;transform:scaleX(1.1730);transform-origin:100% 0;">15</div>
<div class="t" style="top:742.39px;font-size:11px;color:#0000ff;right:352.29999999999995px;transform:scaleX(1.1730);transform-origin:100% 0;">15</div>
<div class="t" style="top:742.39px;font-size:11px;color:#0000ff;right:263.29999999999995px;transform:scaleX(1.1730);transform-origin:100% 0;">15</div>
<div class="t" style="top:742.39px;font-size:11px;color:#0000ff;right:174.29999999999995px;transform:scaleX(1.1730);transform-origin:100% 0;">15</div>
<div class="t" style="top:742.39px;font-size:11px;color:#0000ff;right:85.29999999999995px;transform:scaleX(1.1730);transform-origin:100% 0;">15</div>
<div class="t" style="top:759.39px;font-size:11px;color:#0000ff;left:110.3px;transform:scaleX(1.1225);transform-origin:0 0;">Tariff - Dry bulk revenue - Existing terminal - Domestic</div>
<div class="t" style="top:759.39px;font-size:11px;color:#0000ff;right:1351.8px;transform:scaleX(1.1194);transform-origin:100% 0;">-</div>
<div class="t" style="top:759.39px;font-size:11px;color:#0000ff;left:582.5px;transform:scaleX(1.0485);transform-origin:0 0;">USD / ton</div>
<div class="t" style="top:759.39px;font-size:11px;color:#0000ff;right:1176.8px;transform:scaleX(1.1194);transform-origin:100% 0;">-</div>
<div class="t" style="top:759.39px;font-size:11px;color:#0000ff;right:1085.8px;transform:scaleX(1.1194);transform-origin:100% 0;">-</div>
<div class="t" style="top:759.39px;font-size:11px;color:#0000ff;right:1066.8px;transform:scaleX(1.1194);transform-origin:100% 0;">-</div>
<div class="t" style="top:759.39px;font-size:11px;color:#0000ff;right:977.8px;transform:scaleX(1.1194);transform-origin:100% 0;">-</div>
<div class="t" style="top:759.39px;font-size:11px;color:#0000ff;right:888.8px;transform:scaleX(1.1194);transform-origin:100% 0;">-</div>
<div class="t" style="top:759.39px;font-size:11px;color:#0000ff;right:799.8px;transform:scaleX(1.1194);transform-origin:100% 0;">-</div>
<div class="t" style="top:759.39px;font-size:11px;color:#0000ff;right:710.8px;transform:scaleX(1.1194);transform-origin:100% 0;">-</div>
<div class="t" style="top:759.39px;font-size:11px;color:#0000ff;right:619.3px;transform:scaleX(1.1730);transform-origin:100% 0;">15</div>
<div class="t" style="top:759.39px;font-size:11px;color:#0000ff;right:530.3px;transform:scaleX(1.1730);transform-origin:100% 0;">15</div>
<div class="t" style="top:759.39px;font-size:11px;color:#0000ff;right:441.29999999999995px;transform:scaleX(1.1730);transform-origin:100% 0;">15</div>
<div class="t" style="top:759.39px;font-size:11px;color:#0000ff;right:352.29999999999995px;transform:scaleX(1.1730);transform-origin:100% 0;">15</div>
<div class="t" style="top:759.39px;font-size:11px;color:#0000ff;right:263.29999999999995px;transform:scaleX(1.1730);transform-origin:100% 0;">15</div>
<div class="t" style="top:759.39px;font-size:11px;color:#0000ff;right:174.29999999999995px;transform:scaleX(1.1730);transform-origin:100% 0;">15</div>
<div class="t" style="top:759.39px;font-size:11px;color:#0000ff;right:85.29999999999995px;transform:scaleX(1.1730);transform-origin:100% 0;">15</div>
<div class="t" style="top:782.39px;font-size:11px;color:#0000ff;left:110.3px;transform:scaleX(1.1179);transform-origin:0 0;">Phase flag - [p11]</div>
<div class="t" style="top:782.39px;font-size:11px;color:#0000ff;right:1351.8px;transform:scaleX(1.1194);transform-origin:100% 0;">-</div>
<div class="t" style="top:782.39px;font-size:11px;color:#0000ff;left:582.5px;transform:scaleX(1.1840);transform-origin:0 0;">flag</div>
<div class="t" style="top:782.39px;font-size:11px;color:#0000ff;right:1174.3px;transform:scaleX(1.1730);transform-origin:100% 0;">4</div>
<div class="t" style="top:782.39px;font-size:11px;color:#0000ff;right:1083.3px;transform:scaleX(1.1730);transform-origin:100% 0;">124</div>
<div class="t" style="top:782.39px;font-size:11px;color:#0000ff;right:1066.8px;transform:scaleX(1.1194);transform-origin:100% 0;">-</div>
<div class="t" style="top:782.39px;font-size:11px;color:#0000ff;right:976.3px;transform:scaleX(1.1730);transform-origin:100% 0;">1</div>
<div class="t" style="top:782.39px;font-size:11px;color:#0000ff;right:887.3px;transform:scaleX(1.1730);transform-origin:100% 0;">1</div>
<div class="t" style="top:782.39px;font-size:11px;color:#0000ff;right:798.3px;transform:scaleX(1.1730);transform-origin:100% 0;">1</div>
<div class="t" style="top:782.39px;font-size:11px;color:#0000ff;right:709.3px;transform:scaleX(1.1730);transform-origin:100% 0;">1</div>
<div class="t" style="top:782.39px;font-size:11px;color:#0000ff;right:620.3px;transform:scaleX(1.1730);transform-origin:100% 0;">1</div>
<div class="t" style="top:782.39px;font-size:11px;color:#0000ff;right:531.3px;transform:scaleX(1.1730);transform-origin:100% 0;">1</div>
<div class="t" style="top:782.39px;font-size:11px;color:#0000ff;right:442.29999999999995px;transform:scaleX(1.1730);transform-origin:100% 0;">1</div>
<div class="t" style="top:782.39px;font-size:11px;color:#0000ff;right:353.29999999999995px;transform:scaleX(1.1730);transform-origin:100% 0;">1</div>
<div class="t" style="top:782.39px;font-size:11px;color:#0000ff;right:264.29999999999995px;transform:scaleX(1.1730);transform-origin:100% 0;">1</div>
<div class="t" style="top:782.39px;font-size:11px;color:#0000ff;right:175.29999999999995px;transform:scaleX(1.1730);transform-origin:100% 0;">1</div>
<div class="t" style="top:782.39px;font-size:11px;color:#0000ff;right:86.29999999999995px;transform:scaleX(1.1730);transform-origin:100% 0;">1</div>
<div class="t" style="top:805.39px;font-size:11px;color:#0000ff;left:110.3px;transform:scaleX(1.1122);transform-origin:0 0;">Forecast period flag</div>
<div class="t" style="top:805.39px;font-size:11px;color:#0000ff;right:1351.8px;transform:scaleX(1.1194);transform-origin:100% 0;">-</div>
<div class="t" style="top:805.39px;font-size:11px;color:#0000ff;left:582.5px;transform:scaleX(1.1840);transform-origin:0 0;">flag</div>
<div class="t" style="top:805.39px;font-size:11px;color:#0000ff;right:1174.3px;transform:scaleX(1.1730);transform-origin:100% 0;">4</div>
<div class="t" style="top:805.39px;font-size:11px;color:#0000ff;right:1083.3px;transform:scaleX(1.1730);transform-origin:100% 0;">120</div>
<div class="t" style="top:805.39px;font-size:11px;color:#0000ff;right:1066.8px;transform:scaleX(1.1194);transform-origin:100% 0;">-</div>
<div class="t" style="top:805.39px;font-size:11px;color:#0000ff;right:977.8px;transform:scaleX(1.1194);transform-origin:100% 0;">-</div>
<div class="t" style="top:805.39px;font-size:11px;color:#0000ff;right:888.8px;transform:scaleX(1.1194);transform-origin:100% 0;">-</div>
<div class="t" style="top:805.39px;font-size:11px;color:#0000ff;right:799.8px;transform:scaleX(1.1194);transform-origin:100% 0;">-</div>
<div class="t" style="top:805.39px;font-size:11px;color:#0000ff;right:710.8px;transform:scaleX(1.1194);transform-origin:100% 0;">-</div>
<div class="t" style="top:805.39px;font-size:11px;color:#0000ff;right:620.3px;transform:scaleX(1.1730);transform-origin:100% 0;">1</div>
<div class="t" style="top:805.39px;font-size:11px;color:#0000ff;right:531.3px;transform:scaleX(1.1730);transform-origin:100% 0;">1</div>
<div class="t" style="top:805.39px;font-size:11px;color:#0000ff;right:442.29999999999995px;transform:scaleX(1.1730);transform-origin:100% 0;">1</div>
<div class="t" style="top:805.39px;font-size:11px;color:#0000ff;right:353.29999999999995px;transform:scaleX(1.1730);transform-origin:100% 0;">1</div>
<div class="t" style="top:805.39px;font-size:11px;color:#0000ff;right:264.29999999999995px;transform:scaleX(1.1730);transform-origin:100% 0;">1</div>
<div class="t" style="top:805.39px;font-size:11px;color:#0000ff;right:175.29999999999995px;transform:scaleX(1.1730);transform-origin:100% 0;">1</div>
<div class="t" style="top:805.39px;font-size:11px;color:#0000ff;right:86.29999999999995px;transform:scaleX(1.1730);transform-origin:100% 0;">1</div>
<div class="t" style="top:828.39px;font-size:11px;color:#ff0000;left:110.3px;transform:scaleX(1.1286);transform-origin:0 0;">Tariff - Dry bulk revenue - Existing terminal - Transshipment</div>
<div class="t" style="top:828.39px;font-size:11px;color:#ff0000;left:582.5px;transform:scaleX(1.0485);transform-origin:0 0;">USD / ton</div>
<div class="t" style="top:828.39px;font-size:11px;color:#ff0000;right:1174.3px;transform:scaleX(1.1730);transform-origin:100% 0;">60</div>
<div class="t" style="top:828.39px;font-size:11px;color:#ff0000;right:1083.3px;transform:scaleX(1.1545);transform-origin:100% 0;">1,800</div>
<div class="t" style="top:828.39px;font-size:11px;color:#ff0000;right:977.8px;transform:scaleX(1.1194);transform-origin:100% 0;">-</div>
<div class="t" style="top:828.39px;font-size:11px;color:#ff0000;right:888.8px;transform:scaleX(1.1194);transform-origin:100% 0;">-</div>
<div class="t" style="top:828.39px;font-size:11px;color:#ff0000;right:799.8px;transform:scaleX(1.1194);transform-origin:100% 0;">-</div>
<div class="t" style="top:828.39px;font-size:11px;color:#ff0000;right:710.8px;transform:scaleX(1.1194);transform-origin:100% 0;">-</div>
<div class="t" style="top:828.39px;font-size:11px;color:#ff0000;right:619.3px;transform:scaleX(1.1730);transform-origin:100% 0;">15</div>
<div class="t" style="top:828.39px;font-size:11px;color:#ff0000;right:530.3px;transform:scaleX(1.1730);transform-origin:100% 0;">15</div>
<div class="t" style="top:828.39px;font-size:11px;color:#ff0000;right:441.29999999999995px;transform:scaleX(1.1730);transform-origin:100% 0;">15</div>
<div class="t" style="top:828.39px;font-size:11px;color:#ff0000;right:352.29999999999995px;transform:scaleX(1.1730);transform-origin:100% 0;">15</div>
<div class="t" style="top:828.39px;font-size:11px;color:#ff0000;right:263.29999999999995px;transform:scaleX(1.1730);transform-origin:100% 0;">15</div>
<div class="t" style="top:828.39px;font-size:11px;color:#ff0000;right:174.29999999999995px;transform:scaleX(1.1730);transform-origin:100% 0;">15</div>
<div class="t" style="top:828.39px;font-size:11px;color:#ff0000;right:85.29999999999995px;transform:scaleX(1.1730);transform-origin:100% 0;">15</div>
<div class="t" style="top:845.39px;font-size:11px;color:#ff0000;left:110.3px;transform:scaleX(1.1225);transform-origin:0 0;">Tariff - Dry bulk revenue - Existing terminal - Domestic</div>
<div class="t" style="top:845.39px;font-size:11px;color:#ff0000;left:582.5px;transform:scaleX(1.0485);transform-origin:0 0;">USD / ton</div>
<div class="t" style="top:845.39px;font-size:11px;color:#ff0000;right:1174.3px;transform:scaleX(1.1730);transform-origin:100% 0;">60</div>
<div class="t" style="top:845.39px;font-size:11px;color:#ff0000;right:1083.3px;transform:scaleX(1.1545);transform-origin:100% 0;">1,800</div>
<div class="t" style="top:845.39px;font-size:11px;color:#ff0000;right:977.8px;transform:scaleX(1.1194);transform-origin:100% 0;">-</div>
<div class="t" style="top:845.39px;font-size:11px;color:#ff0000;right:888.8px;transform:scaleX(1.1194);transform-origin:100% 0;">-</div>
<div class="t" style="top:845.39px;font-size:11px;color:#ff0000;right:799.8px;transform:scaleX(1.1194);transform-origin:100% 0;">-</div>
<div class="t" style="top:845.39px;font-size:11px;color:#ff0000;right:710.8px;transform:scaleX(1.1194);transform-origin:100% 0;">-</div>
<div class="t" style="top:845.39px;font-size:11px;color:#ff0000;right:619.3px;transform:scaleX(1.1730);transform-origin:100% 0;">15</div>
<div class="t" style="top:845.39px;font-size:11px;color:#ff0000;right:530.3px;transform:scaleX(1.1730);transform-origin:100% 0;">15</div>
<div class="t" style="top:845.39px;font-size:11px;color:#ff0000;right:441.29999999999995px;transform:scaleX(1.1730);transform-origin:100% 0;">15</div>
<div class="t" style="top:845.39px;font-size:11px;color:#ff0000;right:352.29999999999995px;transform:scaleX(1.1730);transform-origin:100% 0;">15</div>
<div class="t" style="top:845.39px;font-size:11px;color:#ff0000;right:263.29999999999995px;transform:scaleX(1.1730);transform-origin:100% 0;">15</div>
<div class="t" style="top:845.39px;font-size:11px;color:#ff0000;right:174.29999999999995px;transform:scaleX(1.1730);transform-origin:100% 0;">15</div>
<div class="t" style="top:845.39px;font-size:11px;color:#ff0000;right:85.29999999999995px;transform:scaleX(1.1730);transform-origin:100% 0;">15</div>
<div class="a" style="left:104px;top:863px;width:1790px;height:1px;background:#7f7f7f;"></div>
<div class="a" style="left:104px;top:880px;width:1790px;height:1px;background:#7f7f7f;"></div>
<div class="t" style="top:868.39px;font-size:11px;color:#000;left:110.3px;transform:scaleX(1.1336);transform-origin:0 0;">Tariff - Dry bulk revenue - Existing terminal</div>
<div class="t" style="top:868.39px;font-size:11px;color:#000;left:582.5px;transform:scaleX(1.0485);transform-origin:0 0;">USD / ton</div>
<div class="t" style="top:868.39px;font-size:11px;color:#000;right:1174.3px;transform:scaleX(1.1730);transform-origin:100% 0;">120</div>
<div class="t" style="top:868.39px;font-size:11px;color:#000;right:1083.3px;transform:scaleX(1.1545);transform-origin:100% 0;">3,600</div>
<div class="t" style="top:868.39px;font-size:11px;color:#000;right:977.8px;transform:scaleX(1.1194);transform-origin:100% 0;">-</div>
<div class="t" style="top:868.39px;font-size:11px;color:#000;right:888.8px;transform:scaleX(1.1194);transform-origin:100% 0;">-</div>
<div class="t" style="top:868.39px;font-size:11px;color:#000;right:799.8px;transform:scaleX(1.1194);transform-origin:100% 0;">-</div>
<div class="t" style="top:868.39px;font-size:11px;color:#000;right:710.8px;transform:scaleX(1.1194);transform-origin:100% 0;">-</div>
<div class="t" style="top:868.39px;font-size:11px;color:#000;right:619.3px;transform:scaleX(1.1730);transform-origin:100% 0;">30</div>
<div class="t" style="top:868.39px;font-size:11px;color:#000;right:530.3px;transform:scaleX(1.1730);transform-origin:100% 0;">30</div>
<div class="t" style="top:868.39px;font-size:11px;color:#000;right:441.29999999999995px;transform:scaleX(1.1730);transform-origin:100% 0;">30</div>
<div class="t" style="top:868.39px;font-size:11px;color:#000;right:352.29999999999995px;transform:scaleX(1.1730);transform-origin:100% 0;">30</div>
<div class="t" style="top:868.39px;font-size:11px;color:#000;right:263.29999999999995px;transform:scaleX(1.1730);transform-origin:100% 0;">30</div>
<div class="t" style="top:868.39px;font-size:11px;color:#000;right:174.29999999999995px;transform:scaleX(1.1730);transform-origin:100% 0;">30</div>
<div class="t" style="top:868.39px;font-size:11px;color:#000;right:85.29999999999995px;transform:scaleX(1.1730);transform-origin:100% 0;">30</div>
<div class="t" style="top:903.39px;font-size:11px;color:#000;font-weight:700;left:80.8px;transform:scaleX(1.0414);transform-origin:0 0;">1.1.4. Tariff - Break bulk revenue - Existing terminal</div>
<div class="t" style="top:921.39px;font-size:11px;color:#0000ff;left:110.3px;transform:scaleX(1.1231);transform-origin:0 0;">Tariff - Break bulk revenue - Existing terminal - Transshipment</div>
<div class="t" style="top:921.39px;font-size:11px;color:#0000ff;right:1351.8px;transform:scaleX(1.1194);transform-origin:100% 0;">-</div>
<div class="t" style="top:921.39px;font-size:11px;color:#0000ff;left:582.5px;transform:scaleX(1.0485);transform-origin:0 0;">USD / ton</div>
<div class="t" style="top:921.39px;font-size:11px;color:#0000ff;right:1176.8px;transform:scaleX(1.1194);transform-origin:100% 0;">-</div>
<div class="t" style="top:921.39px;font-size:11px;color:#0000ff;right:1085.8px;transform:scaleX(1.1194);transform-origin:100% 0;">-</div>
<div class="t" style="top:921.39px;font-size:11px;color:#0000ff;right:1066.8px;transform:scaleX(1.1194);transform-origin:100% 0;">-</div>
<div class="t" style="top:921.39px;font-size:11px;color:#0000ff;right:977.8px;transform:scaleX(1.1194);transform-origin:100% 0;">-</div>
<div class="t" style="top:921.39px;font-size:11px;color:#0000ff;right:888.8px;transform:scaleX(1.1194);transform-origin:100% 0;">-</div>
<div class="t" style="top:921.39px;font-size:11px;color:#0000ff;right:799.8px;transform:scaleX(1.1194);transform-origin:100% 0;">-</div>
<div class="t" style="top:921.39px;font-size:11px;color:#0000ff;right:710.8px;transform:scaleX(1.1194);transform-origin:100% 0;">-</div>
<div class="t" style="top:921.39px;font-size:11px;color:#0000ff;right:619.3px;transform:scaleX(1.1730);transform-origin:100% 0;">78</div>
<div class="t" style="top:921.39px;font-size:11px;color:#0000ff;right:530.3px;transform:scaleX(1.1730);transform-origin:100% 0;">78</div>
<div class="t" style="top:921.39px;font-size:11px;color:#0000ff;right:441.29999999999995px;transform:scaleX(1.1730);transform-origin:100% 0;">78</div>
<div class="t" style="top:921.39px;font-size:11px;color:#0000ff;right:352.29999999999995px;transform:scaleX(1.1730);transform-origin:100% 0;">78</div>
<div class="t" style="top:921.39px;font-size:11px;color:#0000ff;right:263.29999999999995px;transform:scaleX(1.1730);transform-origin:100% 0;">78</div>
<div class="t" style="top:921.39px;font-size:11px;color:#0000ff;right:174.29999999999995px;transform:scaleX(1.1730);transform-origin:100% 0;">78</div>
<div class="t" style="top:921.39px;font-size:11px;color:#0000ff;right:85.29999999999995px;transform:scaleX(1.1730);transform-origin:100% 0;">78</div>
<div class="t" style="top:938.39px;font-size:11px;color:#0000ff;left:110.3px;transform:scaleX(1.1168);transform-origin:0 0;">Tariff - Break bulk revenue - Existing terminal - Domestic</div>
<div class="t" style="top:938.39px;font-size:11px;color:#0000ff;right:1351.8px;transform:scaleX(1.1194);transform-origin:100% 0;">-</div>
<div class="t" style="top:938.39px;font-size:11px;color:#0000ff;left:582.5px;transform:scaleX(1.0485);transform-origin:0 0;">USD / ton</div>
<div class="t" style="top:938.39px;font-size:11px;color:#0000ff;right:1176.8px;transform:scaleX(1.1194);transform-origin:100% 0;">-</div>
<div class="t" style="top:938.39px;font-size:11px;color:#0000ff;right:1085.8px;transform:scaleX(1.1194);transform-origin:100% 0;">-</div>
<div class="t" style="top:938.39px;font-size:11px;color:#0000ff;right:1066.8px;transform:scaleX(1.1194);transform-origin:100% 0;">-</div>
<div class="t" style="top:938.39px;font-size:11px;color:#0000ff;right:977.8px;transform:scaleX(1.1194);transform-origin:100% 0;">-</div>
<div class="t" style="top:938.39px;font-size:11px;color:#0000ff;right:888.8px;transform:scaleX(1.1194);transform-origin:100% 0;">-</div>
<div class="t" style="top:938.39px;font-size:11px;color:#0000ff;right:799.8px;transform:scaleX(1.1194);transform-origin:100% 0;">-</div>
<div class="t" style="top:938.39px;font-size:11px;color:#0000ff;right:710.8px;transform:scaleX(1.1194);transform-origin:100% 0;">-</div>
<div class="t" style="top:938.39px;font-size:11px;color:#0000ff;right:619.3px;transform:scaleX(1.1730);transform-origin:100% 0;">78</div>
<div class="t" style="top:938.39px;font-size:11px;color:#0000ff;right:530.3px;transform:scaleX(1.1730);transform-origin:100% 0;">78</div>
<div class="t" style="top:938.39px;font-size:11px;color:#0000ff;right:441.29999999999995px;transform:scaleX(1.1730);transform-origin:100% 0;">78</div>
<div class="t" style="top:938.39px;font-size:11px;color:#0000ff;right:352.29999999999995px;transform:scaleX(1.1730);transform-origin:100% 0;">78</div>
<div class="t" style="top:938.39px;font-size:11px;color:#0000ff;right:263.29999999999995px;transform:scaleX(1.1730);transform-origin:100% 0;">78</div>
<div class="t" style="top:938.39px;font-size:11px;color:#0000ff;right:174.29999999999995px;transform:scaleX(1.1730);transform-origin:100% 0;">78</div>
<div class="t" style="top:938.39px;font-size:11px;color:#0000ff;right:85.29999999999995px;transform:scaleX(1.1730);transform-origin:100% 0;">78</div>
<div class="t" style="top:961.39px;font-size:11px;color:#0000ff;left:110.3px;transform:scaleX(1.1179);transform-origin:0 0;">Phase flag - [p11]</div>
<div class="t" style="top:961.39px;font-size:11px;color:#0000ff;right:1351.8px;transform:scaleX(1.1194);transform-origin:100% 0;">-</div>
<div class="t" style="top:961.39px;font-size:11px;color:#0000ff;left:582.5px;transform:scaleX(1.1840);transform-origin:0 0;">flag</div>
<div class="t" style="top:961.39px;font-size:11px;color:#0000ff;right:1174.3px;transform:scaleX(1.1730);transform-origin:100% 0;">4</div>
<div class="t" style="top:961.39px;font-size:11px;color:#0000ff;right:1083.3px;transform:scaleX(1.1730);transform-origin:100% 0;">124</div>
<div class="t" style="top:961.39px;font-size:11px;color:#0000ff;right:1066.8px;transform:scaleX(1.1194);transform-origin:100% 0;">-</div>
<div class="t" style="top:961.39px;font-size:11px;color:#0000ff;right:976.3px;transform:scaleX(1.1730);transform-origin:100% 0;">1</div>
<div class="t" style="top:961.39px;font-size:11px;color:#0000ff;right:887.3px;transform:scaleX(1.1730);transform-origin:100% 0;">1</div>
<div class="t" style="top:961.39px;font-size:11px;color:#0000ff;right:798.3px;transform:scaleX(1.1730);transform-origin:100% 0;">1</div>
<div class="t" style="top:961.39px;font-size:11px;color:#0000ff;right:709.3px;transform:scaleX(1.1730);transform-origin:100% 0;">1</div>
<div class="t" style="top:961.39px;font-size:11px;color:#0000ff;right:620.3px;transform:scaleX(1.1730);transform-origin:100% 0;">1</div>
<div class="t" style="top:961.39px;font-size:11px;color:#0000ff;right:531.3px;transform:scaleX(1.1730);transform-origin:100% 0;">1</div>
<div class="t" style="top:961.39px;font-size:11px;color:#0000ff;right:442.29999999999995px;transform:scaleX(1.1730);transform-origin:100% 0;">1</div>
<div class="t" style="top:961.39px;font-size:11px;color:#0000ff;right:353.29999999999995px;transform:scaleX(1.1730);transform-origin:100% 0;">1</div>
<div class="t" style="top:961.39px;font-size:11px;color:#0000ff;right:264.29999999999995px;transform:scaleX(1.1730);transform-origin:100% 0;">1</div>
<div class="t" style="top:961.39px;font-size:11px;color:#0000ff;right:175.29999999999995px;transform:scaleX(1.1730);transform-origin:100% 0;">1</div>
<div class="t" style="top:961.39px;font-size:11px;color:#0000ff;right:86.29999999999995px;transform:scaleX(1.1730);transform-origin:100% 0;">1</div>
<div class="t" style="top:984.39px;font-size:11px;color:#0000ff;left:110.3px;transform:scaleX(1.1122);transform-origin:0 0;">Forecast period flag</div>
<div class="t" style="top:984.39px;font-size:11px;color:#0000ff;right:1351.8px;transform:scaleX(1.1194);transform-origin:100% 0;">-</div>
<div class="t" style="top:984.39px;font-size:11px;color:#0000ff;left:582.5px;transform:scaleX(1.1840);transform-origin:0 0;">flag</div>
<div class="t" style="top:984.39px;font-size:11px;color:#0000ff;right:1174.3px;transform:scaleX(1.1730);transform-origin:100% 0;">4</div>
<div class="t" style="top:984.39px;font-size:11px;color:#0000ff;right:1083.3px;transform:scaleX(1.1730);transform-origin:100% 0;">120</div>
<div class="t" style="top:984.39px;font-size:11px;color:#0000ff;right:1066.8px;transform:scaleX(1.1194);transform-origin:100% 0;">-</div>
<div class="t" style="top:984.39px;font-size:11px;color:#0000ff;right:977.8px;transform:scaleX(1.1194);transform-origin:100% 0;">-</div>
<div class="t" style="top:984.39px;font-size:11px;color:#0000ff;right:888.8px;transform:scaleX(1.1194);transform-origin:100% 0;">-</div>
<div class="t" style="top:984.39px;font-size:11px;color:#0000ff;right:799.8px;transform:scaleX(1.1194);transform-origin:100% 0;">-</div>
<div class="t" style="top:984.39px;font-size:11px;color:#0000ff;right:710.8px;transform:scaleX(1.1194);transform-origin:100% 0;">-</div>
<div class="t" style="top:984.39px;font-size:11px;color:#0000ff;right:620.3px;transform:scaleX(1.1730);transform-origin:100% 0;">1</div>
<div class="t" style="top:984.39px;font-size:11px;color:#0000ff;right:531.3px;transform:scaleX(1.1730);transform-origin:100% 0;">1</div>
<div class="t" style="top:984.39px;font-size:11px;color:#0000ff;right:442.29999999999995px;transform:scaleX(1.1730);transform-origin:100% 0;">1</div>
<div class="t" style="top:984.39px;font-size:11px;color:#0000ff;right:353.29999999999995px;transform:scaleX(1.1730);transform-origin:100% 0;">1</div>
<div class="t" style="top:984.39px;font-size:11px;color:#0000ff;right:264.29999999999995px;transform:scaleX(1.1730);transform-origin:100% 0;">1</div>
<div class="t" style="top:984.39px;font-size:11px;color:#0000ff;right:175.29999999999995px;transform:scaleX(1.1730);transform-origin:100% 0;">1</div>
<div class="t" style="top:984.39px;font-size:11px;color:#0000ff;right:86.29999999999995px;transform:scaleX(1.1730);transform-origin:100% 0;">1</div>
<div class="t" style="top:1007.39px;font-size:11px;color:#ff0000;left:110.3px;transform:scaleX(1.1231);transform-origin:0 0;">Tariff - Break bulk revenue - Existing terminal - Transshipment</div>
<div class="t" style="top:1007.39px;font-size:11px;color:#ff0000;left:582.5px;transform:scaleX(1.0485);transform-origin:0 0;">USD / ton</div>
<div class="t" style="top:1007.39px;font-size:11px;color:#ff0000;right:1174.3px;transform:scaleX(1.1730);transform-origin:100% 0;">312</div>
<div class="t" style="top:1007.39px;font-size:11px;color:#ff0000;right:1083.3px;transform:scaleX(1.1545);transform-origin:100% 0;">9,360</div>
<div class="t" style="top:1007.39px;font-size:11px;color:#ff0000;right:977.8px;transform:scaleX(1.1194);transform-origin:100% 0;">-</div>
<div class="t" style="top:1007.39px;font-size:11px;color:#ff0000;right:888.8px;transform:scaleX(1.1194);transform-origin:100% 0;">-</div>
<div class="t" style="top:1007.39px;font-size:11px;color:#ff0000;right:799.8px;transform:scaleX(1.1194);transform-origin:100% 0;">-</div>
<div class="t" style="top:1007.39px;font-size:11px;color:#ff0000;right:710.8px;transform:scaleX(1.1194);transform-origin:100% 0;">-</div>
<div class="t" style="top:1007.39px;font-size:11px;color:#ff0000;right:619.3px;transform:scaleX(1.1730);transform-origin:100% 0;">78</div>
<div class="t" style="top:1007.39px;font-size:11px;color:#ff0000;right:530.3px;transform:scaleX(1.1730);transform-origin:100% 0;">78</div>
<div class="t" style="top:1007.39px;font-size:11px;color:#ff0000;right:441.29999999999995px;transform:scaleX(1.1730);transform-origin:100% 0;">78</div>
<div class="t" style="top:1007.39px;font-size:11px;color:#ff0000;right:352.29999999999995px;transform:scaleX(1.1730);transform-origin:100% 0;">78</div>
<div class="t" style="top:1007.39px;font-size:11px;color:#ff0000;right:263.29999999999995px;transform:scaleX(1.1730);transform-origin:100% 0;">78</div>
<div class="t" style="top:1007.39px;font-size:11px;color:#ff0000;right:174.29999999999995px;transform:scaleX(1.1730);transform-origin:100% 0;">78</div>
<div class="t" style="top:1007.39px;font-size:11px;color:#ff0000;right:85.29999999999995px;transform:scaleX(1.1730);transform-origin:100% 0;">78</div>
<div class="t" style="top:1024.39px;font-size:11px;color:#ff0000;left:110.3px;transform:scaleX(1.1168);transform-origin:0 0;">Tariff - Break bulk revenue - Existing terminal - Domestic</div>
<div class="t" style="top:1024.39px;font-size:11px;color:#ff0000;left:582.5px;transform:scaleX(1.0485);transform-origin:0 0;">USD / ton</div>
<div class="t" style="top:1024.39px;font-size:11px;color:#ff0000;right:1174.3px;transform:scaleX(1.1730);transform-origin:100% 0;">312</div>
<div class="t" style="top:1024.39px;font-size:11px;color:#ff0000;right:1083.3px;transform:scaleX(1.1545);transform-origin:100% 0;">9,360</div>
<div class="t" style="top:1024.39px;font-size:11px;color:#ff0000;right:977.8px;transform:scaleX(1.1194);transform-origin:100% 0;">-</div>
<div class="t" style="top:1024.39px;font-size:11px;color:#ff0000;right:888.8px;transform:scaleX(1.1194);transform-origin:100% 0;">-</div>
<div class="t" style="top:1024.39px;font-size:11px;color:#ff0000;right:799.8px;transform:scaleX(1.1194);transform-origin:100% 0;">-</div>
<div class="t" style="top:1024.39px;font-size:11px;color:#ff0000;right:710.8px;transform:scaleX(1.1194);transform-origin:100% 0;">-</div>
<div class="t" style="top:1024.39px;font-size:11px;color:#ff0000;right:619.3px;transform:scaleX(1.1730);transform-origin:100% 0;">78</div>
<div class="t" style="top:1024.39px;font-size:11px;color:#ff0000;right:530.3px;transform:scaleX(1.1730);transform-origin:100% 0;">78</div>
<div class="t" style="top:1024.39px;font-size:11px;color:#ff0000;right:441.29999999999995px;transform:scaleX(1.1730);transform-origin:100% 0;">78</div>
<div class="t" style="top:1024.39px;font-size:11px;color:#ff0000;right:352.29999999999995px;transform:scaleX(1.1730);transform-origin:100% 0;">78</div>
<div class="t" style="top:1024.39px;font-size:11px;color:#ff0000;right:263.29999999999995px;transform:scaleX(1.1730);transform-origin:100% 0;">78</div>
<div class="t" style="top:1024.39px;font-size:11px;color:#ff0000;right:174.29999999999995px;transform:scaleX(1.1730);transform-origin:100% 0;">78</div>
<div class="t" style="top:1024.39px;font-size:11px;color:#ff0000;right:85.29999999999995px;transform:scaleX(1.1730);transform-origin:100% 0;">78</div>
<div class="a" style="left:104px;top:1042px;width:1790px;height:1px;background:#7f7f7f;"></div>
<div class="a" style="left:104px;top:1059px;width:1790px;height:1px;background:#7f7f7f;"></div>
<div class="t" style="top:1047.39px;font-size:11px;color:#000;left:110.3px;transform:scaleX(1.1258);transform-origin:0 0;">Tariff - Break bulk revenue - Existing terminal</div>
<div class="t" style="top:1047.39px;font-size:11px;color:#000;left:582.5px;transform:scaleX(1.0485);transform-origin:0 0;">USD / ton</div>
<div class="t" style="top:1047.39px;font-size:11px;color:#000;right:1174.3px;transform:scaleX(1.1730);transform-origin:100% 0;">624</div>
<div class="t" style="top:1047.39px;font-size:11px;color:#000;right:1083.3px;transform:scaleX(1.1579);transform-origin:100% 0;">18,720</div>
<div class="t" style="top:1047.39px;font-size:11px;color:#000;right:977.8px;transform:scaleX(1.1194);transform-origin:100% 0;">-</div>
<div class="t" style="top:1047.39px;font-size:11px;color:#000;right:888.8px;transform:scaleX(1.1194);transform-origin:100% 0;">-</div>
<div class="t" style="top:1047.39px;font-size:11px;color:#000;right:799.8px;transform:scaleX(1.1194);transform-origin:100% 0;">-</div>
<div class="t" style="top:1047.39px;font-size:11px;color:#000;right:710.8px;transform:scaleX(1.1194);transform-origin:100% 0;">-</div>
<div class="t" style="top:1047.39px;font-size:11px;color:#000;right:619.3px;transform:scaleX(1.1730);transform-origin:100% 0;">156</div>
<div class="t" style="top:1047.39px;font-size:11px;color:#000;right:530.3px;transform:scaleX(1.1730);transform-origin:100% 0;">156</div>
<div class="t" style="top:1047.39px;font-size:11px;color:#000;right:441.29999999999995px;transform:scaleX(1.1730);transform-origin:100% 0;">156</div>
<div class="t" style="top:1047.39px;font-size:11px;color:#000;right:352.29999999999995px;transform:scaleX(1.1730);transform-origin:100% 0;">156</div>
<div class="t" style="top:1047.39px;font-size:11px;color:#000;right:263.29999999999995px;transform:scaleX(1.1730);transform-origin:100% 0;">156</div>
<div class="t" style="top:1047.39px;font-size:11px;color:#000;right:174.29999999999995px;transform:scaleX(1.1730);transform-origin:100% 0;">156</div>
<div class="t" style="top:1047.39px;font-size:11px;color:#000;right:85.29999999999995px;transform:scaleX(1.1730);transform-origin:100% 0;">156</div>
<div class="a" style="left:860px;top:270px;width:92px;height:21px;border:2px solid #217346;box-sizing:border-box"></div>
<div class="a" style="left:947px;top:286px;width:6px;height:6px;background:#217346;border:1px solid #fff;box-sizing:border-box;"></div>
</div>
<div class="a" style="left:0px;top:1023px;width:1920px;height:1px;background:#ababab;"></div>
<div class="a" style="left:1894px;top:136px;width:26px;height:888px;background:#e6e6e6;"></div>
<div class="a" style="left:1894px;top:156px;width:2px;height:867px;background:#a6a6a6;"></div>
<div class="a" style="left:1898px;top:157px;width:19px;height:866px;background:#d9d9d9;"></div>
<div class="a" style="left:1898px;top:138px;width:19px;height:19px;background:#fff;border:1px solid #b8b8b8;box-sizing:border-box;"></div>
<svg class="a" style="left:1901px;top:141px;" width="13" height="13" viewBox="0 0 13 13"><path d="M2 9 L6.5 4.5 L11 9 Z" fill="#6d6d6d"/></svg>
<div class="a" style="left:1898px;top:157px;width:19px;height:404px;background:#fff;border:1px solid #a6a6a6;box-sizing:border-box;"></div>
<div class="a" style="left:1898px;top:1004px;width:19px;height:19px;background:#fff;border:1px solid #b8b8b8;box-sizing:border-box;"></div>
<svg class="a" style="left:1901px;top:1007px;" width="13" height="13" viewBox="0 0 13 13"><path d="M2 4 L6.5 8.5 L11 4 Z" fill="#6d6d6d"/></svg>
<div class="a" style="left:0px;top:1024px;width:1920px;height:28px;background:#e6e6e6;"></div>
<svg class="a" style="left:26px;top:1030px;" width="12" height="16" viewBox="0 0 12 16"><path d="M9 2 L3 8 L9 14 Z" fill="#1e6b3b"/></svg>
<svg class="a" style="left:54px;top:1030px;" width="12" height="16" viewBox="0 0 12 16"><path d="M3 2 L9 8 L3 14 Z" fill="#1e6b3b"/></svg>
<div class="a" style="left:82px;top:1038px;width:3px;height:3px;background:#1e6b3b;"></div>
<div class="a" style="left:88px;top:1038px;width:3px;height:3px;background:#1e6b3b;"></div>
<div class="a" style="left:94px;top:1038px;width:3px;height:3px;background:#1e6b3b;"></div>
<div class="a" style="left:103px;top:1027px;width:1px;height:21px;background:#b4b4b4;"></div>
<div class="a" style="left:106px;top:1026px;width:103px;height:23px;background:#943735;"></div>
<div class="t" style="top:1026.03px;font-size:16.5px;color:#fff;left:118.75px;transform:scaleX(0.9979);transform-origin:0 0;">Disclaimer</div>
<div class="a" style="left:211px;top:1027px;width:1px;height:21px;background:#b4b4b4;"></div>
<div class="a" style="left:214px;top:1026px;width:48px;height:23px;background:#943735;"></div>
<div class="t" style="top:1026.03px;font-size:16.5px;color:#fff;left:224.4px;transform:scaleX(0.9443);transform-origin:0 0;">Key</div>
<div class="a" style="left:264px;top:1027px;width:1px;height:21px;background:#b4b4b4;"></div>
<div class="a" style="left:267px;top:1026px;width:50px;height:23px;background:#ccffff;"></div>
<div class="t" style="top:1026.03px;font-size:16.5px;color:#0a0a14;left:277.5px;transform:scaleX(0.9771);transform-origin:0 0;">Log</div>
<div class="a" style="left:318.5px;top:1027px;width:1px;height:21px;background:#b4b4b4;"></div>
<div class="a" style="left:321.5px;top:1026px;width:105.5px;height:23px;background:#2f739c;"></div>
<div class="t" style="top:1026.03px;font-size:16.5px;color:#fff;left:332.6px;transform:scaleX(1.0109);transform-origin:0 0;">Dashboard</div>
<div class="a" style="left:429px;top:1027px;width:1px;height:21px;background:#b4b4b4;"></div>
<div class="a" style="left:432px;top:1026px;width:76px;height:23px;background:#2f739c;"></div>
<div class="t" style="top:1026.03px;font-size:16.5px;color:#fff;left:443.5px;transform:scaleX(0.9718);transform-origin:0 0;">FinStat</div>
<div class="a" style="left:510px;top:1027px;width:1px;height:21px;background:#b4b4b4;"></div>
<div class="a" style="left:513px;top:1026px;width:76.39999999999998px;height:23px;background:#ffffcc;"></div>
<div class="t" style="top:1026.03px;font-size:16.5px;color:#0a0a14;left:523.6px;transform:scaleX(0.9924);transform-origin:0 0;">Actuals</div>
<div class="a" style="left:592px;top:1027px;width:1px;height:21px;background:#b4b4b4;"></div>
<div class="a" style="left:595px;top:1026px;width:69px;height:23px;background:#ffffcc;"></div>
<div class="t" style="top:1026.03px;font-size:16.5px;color:#0a0a14;left:605.4px;transform:scaleX(1.0568);transform-origin:0 0;">Inputs</div>
<div class="a" style="left:666px;top:1027px;width:1px;height:21px;background:#b4b4b4;"></div>
<div class="a" style="left:669px;top:1026px;width:81.60000000000002px;height:23px;background:#c0c0c0;"></div>
<div class="t" style="top:1026.03px;font-size:16.5px;color:#0a0a14;left:679px;transform:scaleX(1.0298);transform-origin:0 0;">Convert</div>
<div class="a" style="left:753px;top:1027px;width:1px;height:21px;background:#b4b4b4;"></div>
<div class="a" style="left:756px;top:1026px;width:59.60000000000002px;height:23px;background:#c0c0c0;"></div>
<div class="t" style="top:1026.03px;font-size:16.5px;color:#0a0a14;left:766.3px;transform:scaleX(0.9220);transform-origin:0 0;">Flags</div>
<div class="a" style="left:818px;top:1027px;width:1px;height:21px;background:#b4b4b4;"></div>
<div class="a" style="left:821px;top:1026px;width:98px;height:23px;background:#c0c0c0;"></div>
<div class="t" style="top:1026.03px;font-size:16.5px;color:#0a0a14;left:831.6px;transform:scaleX(0.9799);transform-origin:0 0;">Escalation</div>
<div class="a" style="left:921px;top:1027px;width:1px;height:21px;background:#b4b4b4;"></div>
<div class="a" style="left:924px;top:1026px;width:80.39999999999998px;height:23px;background:#c0c0c0;"></div>
<div class="t" style="top:1026.03px;font-size:16.5px;color:#0a0a14;left:934.3px;transform:scaleX(1.0538);transform-origin:0 0;">Volume</div>
<div class="a" style="left:1003px;top:1027px;width:1px;height:21px;background:#b4b4b4;"></div>
<div class="a" style="left:1007px;top:1023px;width:69px;height:26px;background:#ffffff;border-left:1px solid #ababab;border-right:1px solid #ababab;box-sizing:border-box;"></div>
<div class="a" style="left:1006px;top:1047px;width:70px;height:2px;background:#217346;"></div>
<div class="t" style="top:1026.03px;font-size:16.5px;color:#217346;font-weight:700;left:1018.6px;transform:scaleX(1.0993);transform-origin:0 0;">Tariff</div>
<div class="a" style="left:1086px;top:1039.5px;width:2.5px;height:2.5px;background:#1e6b3b;"></div>
<div class="a" style="left:1091.5px;top:1039.5px;width:2.5px;height:2.5px;background:#1e6b3b;"></div>
<div class="a" style="left:1097px;top:1039.5px;width:2.5px;height:2.5px;background:#1e6b3b;"></div>
<div class="a" style="left:1111px;top:1028px;width:19px;height:19px;border:1.5px solid #666;border-radius:50%;box-sizing:border-box"></div>
<div class="a" style="left:1115.5px;top:1037px;width:10px;height:1.5px;background:#666;"></div>
<div class="a" style="left:1119.8px;top:1032.5px;width:1.5px;height:10px;background:#666;"></div>
<div class="a" style="left:1149px;top:1030px;width:3px;height:3px;background:#9a9a9a;"></div>
<div class="a" style="left:1149px;top:1036px;width:3px;height:3px;background:#9a9a9a;"></div>
<div class="a" style="left:1149px;top:1042px;width:3px;height:3px;background:#9a9a9a;"></div>
<div class="a" style="left:1167px;top:1028px;width:707px;height:19px;background:#d9d9d9;"></div>
<div class="a" style="left:1167px;top:1028px;width:19px;height:19px;background:#fff;border:1px solid #b8b8b8;box-sizing:border-box;"></div>
<svg class="a" style="left:1170px;top:1031px;" width="13" height="13" viewBox="0 0 13 13"><path d="M8.5 2 L4 6.5 L8.5 11 Z" fill="#555"/></svg>
<div class="a" style="left:1185px;top:1028px;width:79px;height:19px;background:#fff;border:1px solid #a6a6a6;box-sizing:border-box;"></div>
<div class="a" style="left:1874px;top:1028px;width:19px;height:19px;background:#fff;border:1px solid #b8b8b8;box-sizing:border-box;"></div>
<svg class="a" style="left:1877px;top:1031px;" width="13" height="13" viewBox="0 0 13 13"><path d="M4.5 2 L9 6.5 L4.5 11 Z" fill="#555"/></svg>
<div class="a" style="left:0px;top:1052px;width:1920px;height:26px;background:#f3f2f1;"></div>
<div class="a" style="left:0px;top:1052px;width:1920px;height:1px;background:#d6d6d6;"></div>
<div class="t" style="top:1060.22px;font-size:12.5px;color:#444;left:9.6px;transform:scaleX(0.9797);transform-origin:0 0;">Ready</div>
<svg class="a" style="left:69px;top:1057px;" width="20" height="18" viewBox="0 0 20 18"><g fill="none" stroke="#555" stroke-width="1.4"><path d="M2 15 V2 H17 V5"/><path d="M2 5 H17"/><path d="M4 8 H7 M4 11 H7"/><circle cx="13" cy="11.5" r="4.5"/></g><circle cx="13" cy="11.5" r="2" fill="#555"/></svg>
<div class="a" style="left:1555px;top:1053px;width:50px;height:25px;background:#d4d4d4;"></div>
<svg class="a" style="left:1570px;top:1057px;" width="20" height="18" viewBox="0 0 20 18"><g fill="#555"><rect x="1" y="1" width="18" height="16"/></g><g fill="#d4d4d4"><rect x="6" y="2.5" width="1.5" height="13"/><rect x="12" y="2.5" width="1.5" height="13"/><rect x="2.5" y="6" width="15" height="1.5"/><rect x="2.5" y="11" width="15" height="1.5"/></g></svg>
<svg class="a" style="left:1620px;top:1057px;" width="20" height="18" viewBox="0 0 20 18"><g fill="none" stroke="#555" stroke-width="1.2"><rect x="1.5" y="1.5" width="16" height="15"/><rect x="4.5" y="4.5" width="10" height="9"/></g><g stroke="#555" stroke-width="1"><path d="M6.5 7 H12.5 M6.5 9 H12.5 M6.5 11 H12.5"/></g></svg>
<svg class="a" style="left:1670px;top:1057px;" width="20" height="18" viewBox="0 0 20 18"><g fill="none" stroke="#555" stroke-width="1.4"><rect x="1.5" y="1.5" width="16" height="15"/><path d="M1.5 10 H9 V1.5 M13 1.5 V8"/></g></svg>
<div class="a" style="left:1713px;top:1065px;width:10px;height:1px;background:#555;"></div>
<div class="a" style="left:1728px;top:1065px;width:125px;height:1px;background:#a0a0a0;"></div>
<div class="a" style="left:1775px;top:1058px;width:5px;height:15px;background:#777;"></div>
<div class="a" style="left:1790px;top:1061px;width:1px;height:8px;background:#a0a0a0;"></div>
<div class="a" style="left:1858px;top:1065px;width:11px;height:1px;background:#555;"></div>
<div class="a" style="left:1863px;top:1060px;width:1px;height:11px;background:#555;"></div>
<div class="t" style="top:1059.15px;font-size:14px;color:#444;left:1885px;transform:scaleX(0.9300);transform-origin:0 0;">80%</div>
<div class="a" style="left:0px;top:1078px;width:1920px;height:2px;background:#e8e8e8;"></div>
<div class="a" style="left:0px;top:1078px;width:60px;height:2px;background:#333;"></div>
<div class="a" style="left:490px;top:1078px;width:375px;height:2px;background:#3a3a3a;"></div>
<div class="a" style="left:865px;top:1078px;width:55px;height:2px;background:#777;"></div>
<div class="a" style="left:920px;top:1078px;width:1000px;height:2px;background:#3a3a3a;"></div>
</body></html>
